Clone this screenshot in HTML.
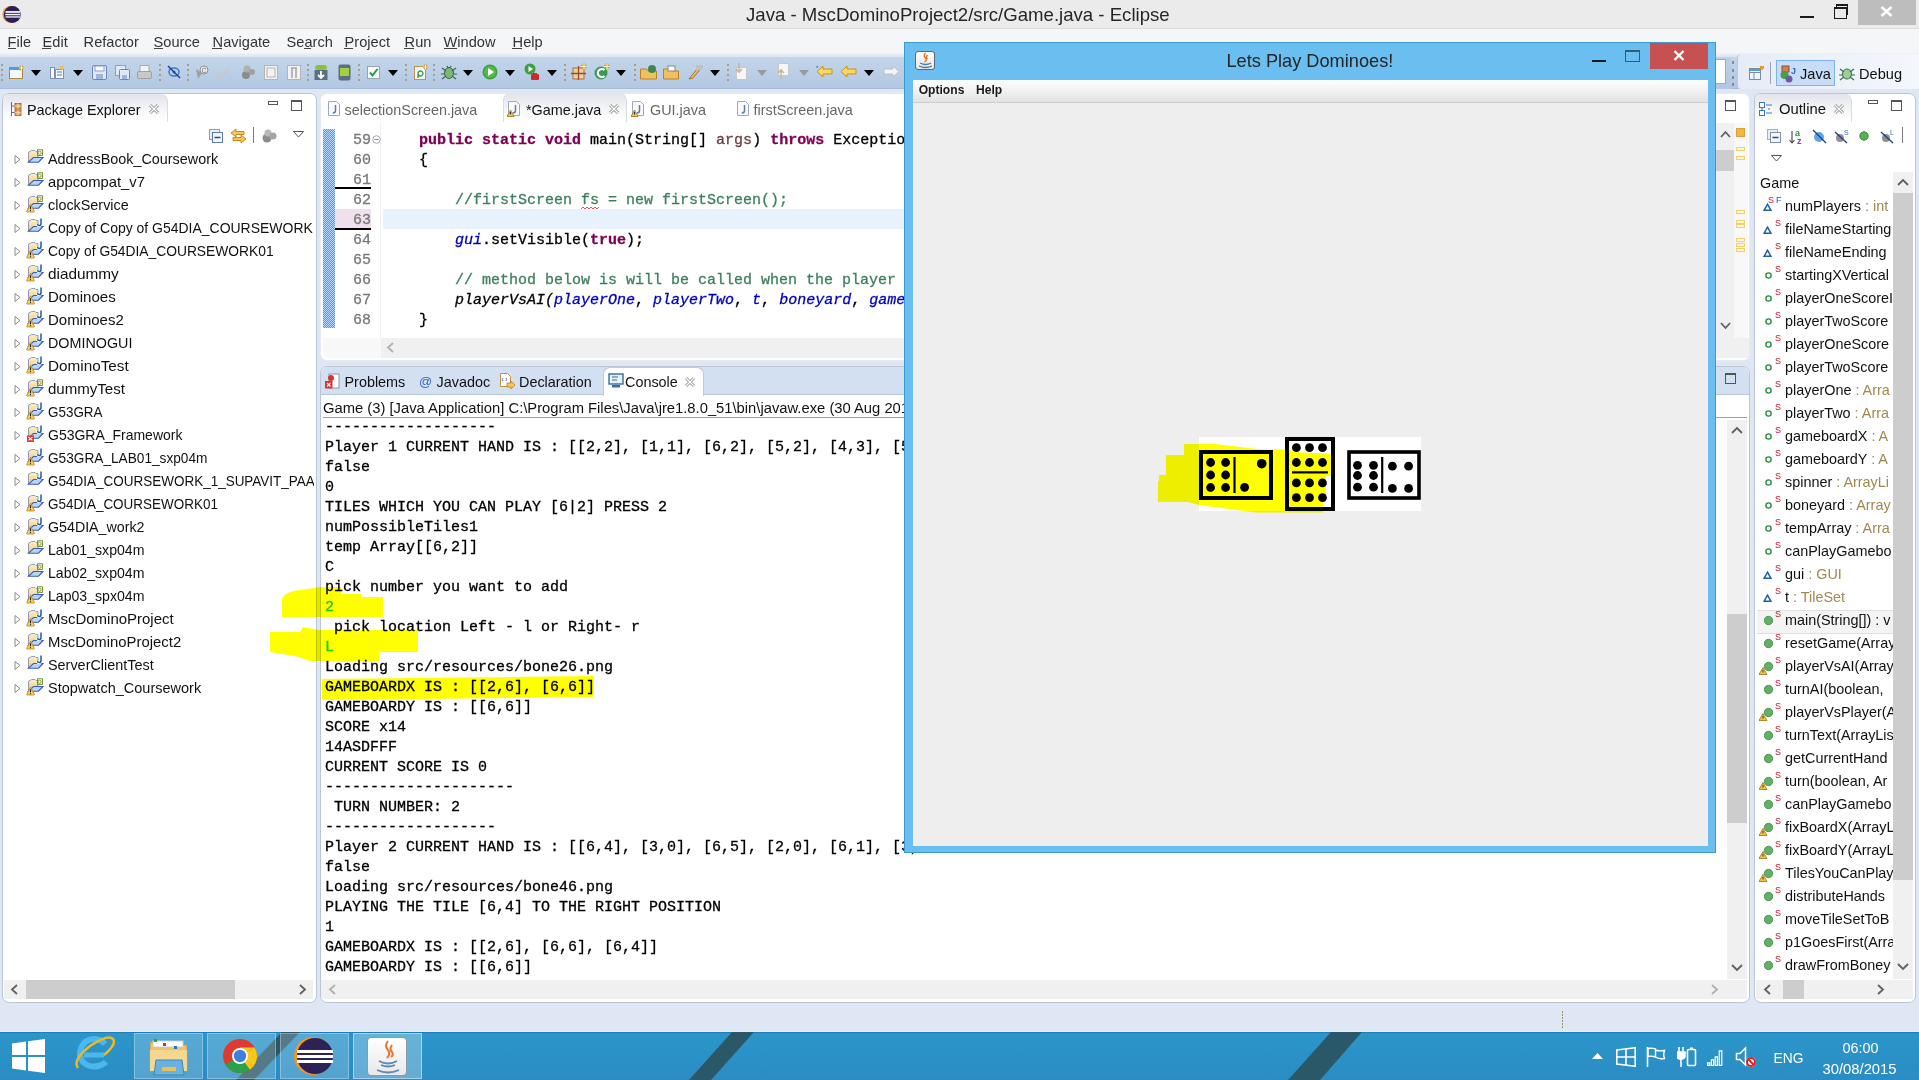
<!DOCTYPE html><html><head><meta charset="utf-8"><style>
html,body{margin:0;padding:0;}
body{width:1919px;height:1080px;overflow:hidden;position:relative;background:#dfe6f4;font-family:"Liberation Sans",sans-serif;}
.t{position:absolute;white-space:pre;}
.m{-webkit-text-stroke:0.3px currentColor;}
</style></head><body>
<div style="position:absolute;left:0px;top:0px;width:1919px;height:28px;background:#ebebeb;"></div>
<div style="position:absolute;left:0px;top:28px;width:1919px;height:1px;background:#dcdcdc;"></div>
<svg style="position:absolute;left:0px;top:0px;" width="28" height="28" viewBox="0 0 28 28"><circle cx="11" cy="14.4" r="8.6" fill="#f39a26"/><circle cx="12.3" cy="14.4" r="8.5" fill="#2a1f5c"/><rect x="5.5" y="11" width="14.5" height="1.9" fill="#e8e8f0"/><rect x="5.2" y="13.8" width="15" height="1.5" fill="#f4f4f8"/><rect x="5.5" y="16.2" width="14.5" height="1.5" fill="#d8dae8"/></svg>
<div class="t" style="left:746px;top:4.961px;font-family:'Liberation Sans', sans-serif;font-size:18.6px;line-height:20.78px;color:#262626;font-weight:normal;font-style:normal;">Java - MscDominoProject2/src/Game.java - Eclipse</div>
<div style="position:absolute;left:1800px;top:16px;width:14px;height:2px;background:#1a1a1a;"></div>
<div style="position:absolute;left:1836px;top:4px;width:12px;height:11px;border:1px solid #1a1a1a;border-top:2px solid #1a1a1a;box-sizing:border-box;"></div>
<div style="position:absolute;left:1834px;top:7px;width:13px;height:12px;border:1px solid #1a1a1a;border-top:2px solid #1a1a1a;box-sizing:border-box;background:#ebebeb;"></div>
<div style="position:absolute;left:1858px;top:0px;width:58px;height:25px;background:#bdbdbd;"></div>
<svg style="position:absolute;left:1880px;top:6px;" width="13" height="11" viewBox="0 0 13 11"><path d="M1.5 1 L11.5 10 M11.5 1 L1.5 10" stroke="#fff" stroke-width="2.4"/></svg>
<div style="position:absolute;left:0px;top:29px;width:1919px;height:24px;background:#f5f6f7;"></div>
<div style="position:absolute;left:0px;top:53px;width:1919px;height:4px;background:linear-gradient(#f0f3f8,#dbe5f1);"></div>
<div class="t" style="left:7.6px;top:33.983px;font-family:'Liberation Sans', sans-serif;font-size:14.6px;line-height:16.311px;color:#333;font-weight:normal;font-style:normal;transform:scale(1.0,1.05);transform-origin:0 13.217px;">File</div>
<div class="t" style="left:42.6px;top:33.983px;font-family:'Liberation Sans', sans-serif;font-size:14.6px;line-height:16.311px;color:#333;font-weight:normal;font-style:normal;transform:scale(1.0,1.05);transform-origin:0 13.217px;">Edit</div>
<div class="t" style="left:83.6px;top:33.983px;font-family:'Liberation Sans', sans-serif;font-size:14.6px;line-height:16.311px;color:#333;font-weight:normal;font-style:normal;transform:scale(1.0,1.05);transform-origin:0 13.217px;">Refactor</div>
<div class="t" style="left:153.6px;top:33.983px;font-family:'Liberation Sans', sans-serif;font-size:14.6px;line-height:16.311px;color:#333;font-weight:normal;font-style:normal;transform:scale(1.0,1.05);transform-origin:0 13.217px;">Source</div>
<div class="t" style="left:212.6px;top:33.983px;font-family:'Liberation Sans', sans-serif;font-size:14.6px;line-height:16.311px;color:#333;font-weight:normal;font-style:normal;transform:scale(1.0,1.05);transform-origin:0 13.217px;">Navigate</div>
<div class="t" style="left:286.6px;top:33.983px;font-family:'Liberation Sans', sans-serif;font-size:14.6px;line-height:16.311px;color:#333;font-weight:normal;font-style:normal;transform:scale(1.0,1.05);transform-origin:0 13.217px;">Search</div>
<div class="t" style="left:344.6px;top:33.983px;font-family:'Liberation Sans', sans-serif;font-size:14.6px;line-height:16.311px;color:#333;font-weight:normal;font-style:normal;transform:scale(1.0,1.05);transform-origin:0 13.217px;">Project</div>
<div class="t" style="left:404.6px;top:33.983px;font-family:'Liberation Sans', sans-serif;font-size:14.6px;line-height:16.311px;color:#333;font-weight:normal;font-style:normal;transform:scale(1.0,1.05);transform-origin:0 13.217px;">Run</div>
<div class="t" style="left:443.6px;top:33.983px;font-family:'Liberation Sans', sans-serif;font-size:14.6px;line-height:16.311px;color:#333;font-weight:normal;font-style:normal;transform:scale(1.0,1.05);transform-origin:0 13.217px;">Window</div>
<div class="t" style="left:512.6px;top:33.983px;font-family:'Liberation Sans', sans-serif;font-size:14.6px;line-height:16.311px;color:#333;font-weight:normal;font-style:normal;transform:scale(1.0,1.05);transform-origin:0 13.217px;">Help</div>
<div style="position:absolute;left:8px;top:48px;width:8px;height:1px;background:#444;"></div>
<div style="position:absolute;left:42px;top:48px;width:9px;height:1px;background:#444;"></div>
<div style="position:absolute;left:154px;top:48px;width:9px;height:1px;background:#444;"></div>
<div style="position:absolute;left:212px;top:48px;width:10px;height:1px;background:#444;"></div>
<div style="position:absolute;left:304px;top:48px;width:7px;height:1px;background:#444;"></div>
<div style="position:absolute;left:344px;top:48px;width:9px;height:1px;background:#444;"></div>
<div style="position:absolute;left:404px;top:48px;width:10px;height:1px;background:#444;"></div>
<div style="position:absolute;left:444px;top:48px;width:13px;height:1px;background:#444;"></div>
<div style="position:absolute;left:512px;top:48px;width:10px;height:1px;background:#444;"></div>
<div style="position:absolute;left:0px;top:57px;width:1919px;height:32px;background:linear-gradient(#c3d5ea,#b1c8e2);"></div>
<div style="position:absolute;left:0px;top:88px;width:1919px;height:1px;background:#a9bcd6;"></div>
<div style="position:absolute;left:1px;top:64px;width:2px;height:2px;background:#a89c84;"></div>
<div style="position:absolute;left:1px;top:69px;width:2px;height:2px;background:#a89c84;"></div>
<div style="position:absolute;left:1px;top:74px;width:2px;height:2px;background:#a89c84;"></div>
<div style="position:absolute;left:1px;top:79px;width:2px;height:2px;background:#a89c84;"></div>
<svg style="position:absolute;left:9px;top:65px;" width="16" height="15" viewBox="0 0 16 15"><rect x="0.5" y="2.5" width="13" height="11" fill="#f4f8fc" stroke="#b08840"/><rect x="1" y="3" width="12" height="2" fill="#4aa0e0"/><path d="M12.5 0.5 v5 M10 3 h5" stroke="#c89020" stroke-width="2.4"/><path d="M12.5 0.5 v5 M10 3 h5" stroke="#fff4b0" stroke-width="1"/></svg>
<svg style="position:absolute;left:31px;top:70px;" width="10" height="6" viewBox="0 0 10 6"><path d="M0 0 L10 0 L5 6 Z" fill="#000"/></svg>
<svg style="position:absolute;left:50px;top:65px;" width="16" height="15" viewBox="0 0 16 15"><rect x="0.5" y="2.5" width="4" height="11" fill="#f4f8fc" stroke="#8090b0"/><rect x="5.5" y="4.5" width="8" height="9" fill="#f4f8fc" stroke="#8090b0"/><path d="M7 7 h5 M7 10 h5" stroke="#6070a0"/><circle cx="12" cy="2.5" r="2.2" fill="#f0c060"/></svg>
<svg style="position:absolute;left:73px;top:70px;" width="10" height="6" viewBox="0 0 10 6"><path d="M0 0 L10 0 L5 6 Z" fill="#000"/></svg>
<svg style="position:absolute;left:92px;top:65px;" width="15" height="15" viewBox="0 0 15 15"><rect x="0.5" y="0.5" width="14" height="14" rx="1.5" fill="#dfe8f4" stroke="#6a86c0"/><rect x="3" y="1" width="9" height="5" fill="#f8fbff" stroke="#8aa0c8"/><rect x="4" y="9" width="7" height="5" fill="#9fb4d8"/></svg>
<svg style="position:absolute;left:115px;top:65px;" width="15" height="15" viewBox="0 0 15 15"><rect x="0.5" y="0.5" width="10" height="10" fill="#dfe8f4" stroke="#8aa0c8"/><rect x="4.5" y="4.5" width="10" height="10" rx="1" fill="#dfe8f4" stroke="#6a86c0"/><rect x="7" y="10" width="5" height="4" fill="#9fb4d8"/></svg>
<svg style="position:absolute;left:137px;top:65px;" width="15" height="15" viewBox="0 0 15 15"><rect x="3" y="0.5" width="9" height="6" fill="#f4f4f4" stroke="#aaa"/><rect x="0.5" y="6.5" width="14" height="7" rx="1.5" fill="#c8c8c8" stroke="#a0a0a0"/></svg>
<div style="position:absolute;left:159px;top:64px;width:2px;height:2px;background:#a89c84;"></div>
<div style="position:absolute;left:159px;top:69px;width:2px;height:2px;background:#a89c84;"></div>
<div style="position:absolute;left:159px;top:74px;width:2px;height:2px;background:#a89c84;"></div>
<div style="position:absolute;left:159px;top:79px;width:2px;height:2px;background:#a89c84;"></div>
<svg style="position:absolute;left:167px;top:65px;" width="14" height="14" viewBox="0 0 14 14"><ellipse cx="7" cy="7" rx="5" ry="4" fill="none" stroke="#3c78c8" stroke-width="1.5"/><circle cx="7" cy="7" r="1.6" fill="#3c78c8"/><path d="M1 1 L13 13" stroke="#1c3c90" stroke-width="1.4"/></svg>
<div style="position:absolute;left:187px;top:64px;width:2px;height:2px;background:#a89c84;"></div>
<div style="position:absolute;left:187px;top:69px;width:2px;height:2px;background:#a89c84;"></div>
<div style="position:absolute;left:187px;top:74px;width:2px;height:2px;background:#a89c84;"></div>
<div style="position:absolute;left:187px;top:79px;width:2px;height:2px;background:#a89c84;"></div>
<svg style="position:absolute;left:194px;top:65px;" width="15" height="15" viewBox="0 0 15 15"><path d="M2 4 L8 8 L4 14 Z" fill="#a0a0a0"/><circle cx="10" cy="5" r="4" fill="#e8e8e8" stroke="#909090"/><text x="7.5" y="8" font-size="7" font-family="Liberation Sans" fill="#707070">C</text></svg>
<svg style="position:absolute;left:216px;top:65px;" width="15" height="15" viewBox="0 0 15 15"><path d="M1 14 L10 5 L14 1 L12 6 L4 14 Z" fill="#c8c8c8"/></svg>
<svg style="position:absolute;left:241px;top:65px;" width="14" height="15" viewBox="0 0 14 15"><circle cx="5" cy="10" r="4" fill="#8c8c8c"/><circle cx="6" cy="4" r="3.5" fill="#b0b0b0"/><circle cx="11" cy="7" r="3" fill="#a0a0a0"/></svg>
<svg style="position:absolute;left:264px;top:65px;" width="14" height="15" viewBox="0 0 14 15"><rect x="0.5" y="0.5" width="13" height="14" fill="#f2f2f2" stroke="#b4b4b4"/><rect x="3" y="3" width="8" height="9" fill="none" stroke="#b4b4b4"/></svg>
<svg style="position:absolute;left:287px;top:65px;" width="14" height="15" viewBox="0 0 14 15"><rect x="0.5" y="0.5" width="13" height="14" fill="#f2f2f2" stroke="#b4b4b4"/><path d="M5 3 v10 M9 3 v10 M4 3 h6" stroke="#a8a8a8" stroke-width="1.6"/></svg>
<div style="position:absolute;left:307px;top:64px;width:2px;height:2px;background:#a89c84;"></div>
<div style="position:absolute;left:307px;top:69px;width:2px;height:2px;background:#a89c84;"></div>
<div style="position:absolute;left:307px;top:74px;width:2px;height:2px;background:#a89c84;"></div>
<div style="position:absolute;left:307px;top:79px;width:2px;height:2px;background:#a89c84;"></div>
<svg style="position:absolute;left:314px;top:63px;" width="14" height="18" viewBox="0 0 14 18"><rect x="1" y="2" width="12" height="5" rx="3" fill="#8cc040"/><rect x="0.5" y="7" width="13" height="10" fill="#5a6f80"/><path d="M7 8 v7 M4 12 l3 3 l3 -3" stroke="#fff" stroke-width="1.8" fill="none"/></svg>
<svg style="position:absolute;left:338px;top:64px;" width="13" height="17" viewBox="0 0 13 17"><rect x="0.5" y="0.5" width="12" height="16" rx="2" fill="#5a6f80"/><rect x="2" y="4" width="9" height="8" fill="#a4d040"/></svg>
<div style="position:absolute;left:358px;top:64px;width:2px;height:2px;background:#a89c84;"></div>
<div style="position:absolute;left:358px;top:69px;width:2px;height:2px;background:#a89c84;"></div>
<div style="position:absolute;left:358px;top:74px;width:2px;height:2px;background:#a89c84;"></div>
<div style="position:absolute;left:358px;top:79px;width:2px;height:2px;background:#a89c84;"></div>
<svg style="position:absolute;left:367px;top:66px;" width="13" height="13" viewBox="0 0 13 13"><rect x="0.5" y="0.5" width="12" height="12" fill="#f8f8f8" stroke="#9aa4b0"/><path d="M3 6.5 L5.5 9.5 L10.5 3" stroke="#2a9a40" stroke-width="2" fill="none"/></svg>
<svg style="position:absolute;left:388px;top:70px;" width="10" height="6" viewBox="0 0 10 6"><path d="M0 0 L10 0 L5 6 Z" fill="#000"/></svg>
<div style="position:absolute;left:405px;top:64px;width:2px;height:2px;background:#a89c84;"></div>
<div style="position:absolute;left:405px;top:69px;width:2px;height:2px;background:#a89c84;"></div>
<div style="position:absolute;left:405px;top:74px;width:2px;height:2px;background:#a89c84;"></div>
<div style="position:absolute;left:405px;top:79px;width:2px;height:2px;background:#a89c84;"></div>
<svg style="position:absolute;left:414px;top:64px;" width="14" height="16" viewBox="0 0 14 16"><rect x="0.5" y="2.5" width="11" height="13" fill="#fafafa" stroke="#c09050"/><path d="M4 14 v-5 a2.5 2.5 0 1 1 0 1" stroke="#2a9a40" fill="none" stroke-width="1.3"/><path d="M11.5 0.5 v5 M9 3 h5" stroke="#c89020" stroke-width="2.4"/><path d="M11.5 0.5 v5 M9 3 h5" stroke="#fff4b0" stroke-width="1"/></svg>
<div style="position:absolute;left:433px;top:64px;width:2px;height:2px;background:#a89c84;"></div>
<div style="position:absolute;left:433px;top:69px;width:2px;height:2px;background:#a89c84;"></div>
<div style="position:absolute;left:433px;top:74px;width:2px;height:2px;background:#a89c84;"></div>
<div style="position:absolute;left:433px;top:79px;width:2px;height:2px;background:#a89c84;"></div>
<svg style="position:absolute;left:441px;top:64px;" width="16" height="16" viewBox="0 0 16 16"><ellipse cx="8" cy="9" rx="4.5" ry="5.5" fill="#7cb870" stroke="#3a6a50"/><path d="M1 4 l4 3 M15 4 l-4 3 M0 10 h4 M16 10 h-4 M1 15 l4 -3 M15 15 l-4 -3 M6 2 l1 2 M10 2 l-1 2" stroke="#3a6a50" stroke-width="1.2"/></svg>
<svg style="position:absolute;left:463px;top:70px;" width="10" height="6" viewBox="0 0 10 6"><path d="M0 0 L10 0 L5 6 Z" fill="#000"/></svg>
<svg style="position:absolute;left:482px;top:64px;" width="16" height="16" viewBox="0 0 16 16"><circle cx="8" cy="8" r="7.5" fill="#3aa040"/><circle cx="8" cy="8" r="6" fill="#54b848"/><path d="M6 4 L12 8 L6 12 Z" fill="#fff"/></svg>
<svg style="position:absolute;left:505px;top:70px;" width="10" height="6" viewBox="0 0 10 6"><path d="M0 0 L10 0 L5 6 Z" fill="#000"/></svg>
<svg style="position:absolute;left:524px;top:63px;" width="16" height="18" viewBox="0 0 16 18"><circle cx="6" cy="6" r="5.5" fill="#3aa040"/><path d="M4.5 3 L9 6 L4.5 9 Z" fill="#fff"/><rect x="7" y="11" width="8" height="6" rx="1" fill="#d02828"/><rect x="9" y="10" width="4" height="2" fill="#d02828"/></svg>
<svg style="position:absolute;left:547px;top:70px;" width="10" height="6" viewBox="0 0 10 6"><path d="M0 0 L10 0 L5 6 Z" fill="#000"/></svg>
<div style="position:absolute;left:564px;top:64px;width:2px;height:2px;background:#a89c84;"></div>
<div style="position:absolute;left:564px;top:69px;width:2px;height:2px;background:#a89c84;"></div>
<div style="position:absolute;left:564px;top:74px;width:2px;height:2px;background:#a89c84;"></div>
<div style="position:absolute;left:564px;top:79px;width:2px;height:2px;background:#a89c84;"></div>
<svg style="position:absolute;left:571px;top:63px;" width="17" height="17" viewBox="0 0 17 17"><rect x="2" y="5" width="11" height="11" fill="#ecd0a0" stroke="#b07040"/><path d="M7.5 3 v14 M0 10.5 h15" stroke="#a04828" stroke-width="1.3"/><path d="M13 0.5 v6 M10 3.5 h6" stroke="#c89020" stroke-width="2.6"/><path d="M13 0.5 v6 M10 3.5 h6" stroke="#fff4b0" stroke-width="1.2"/></svg>
<svg style="position:absolute;left:594px;top:63px;" width="17" height="17" viewBox="0 0 17 17"><circle cx="7" cy="10" r="6.5" fill="#3a9a50"/><path d="M10.5 7 A4 4 0 1 0 10.5 13" stroke="#fff" stroke-width="2.2" fill="none"/><path d="M13 0.5 v6 M10 3.5 h6" stroke="#c89020" stroke-width="2.6"/><path d="M13 0.5 v6 M10 3.5 h6" stroke="#fff4b0" stroke-width="1.2"/></svg>
<svg style="position:absolute;left:616px;top:70px;" width="10" height="6" viewBox="0 0 10 6"><path d="M0 0 L10 0 L5 6 Z" fill="#000"/></svg>
<div style="position:absolute;left:634px;top:64px;width:2px;height:2px;background:#a89c84;"></div>
<div style="position:absolute;left:634px;top:69px;width:2px;height:2px;background:#a89c84;"></div>
<div style="position:absolute;left:634px;top:74px;width:2px;height:2px;background:#a89c84;"></div>
<div style="position:absolute;left:634px;top:79px;width:2px;height:2px;background:#a89c84;"></div>
<svg style="position:absolute;left:640px;top:64px;" width="17" height="16" viewBox="0 0 17 16"><path d="M0.5 5 h6 l2 2 h8 v8 h-16 Z" fill="#f0c060" stroke="#c08020"/><circle cx="12" cy="5" r="4" fill="#3a8a50"/></svg>
<svg style="position:absolute;left:663px;top:64px;" width="16" height="16" viewBox="0 0 16 16"><path d="M0.5 5 h6 l2 2 h7 v8 h-15 Z" fill="#f0c060" stroke="#c08020"/><rect x="5" y="2" width="7" height="5" fill="#fff" stroke="#888"/></svg>
<svg style="position:absolute;left:687px;top:64px;" width="16" height="16" viewBox="0 0 16 16"><path d="M2 15 L10 5 L14 1 L15 3 L6 14 Z" fill="#f0c060" stroke="#a07030"/><rect x="9" y="1" width="6" height="5" fill="#c0c0c0"/></svg>
<svg style="position:absolute;left:710px;top:70px;" width="10" height="6" viewBox="0 0 10 6"><path d="M0 0 L10 0 L5 6 Z" fill="#000"/></svg>
<div style="position:absolute;left:727px;top:64px;width:2px;height:2px;background:#a89c84;"></div>
<div style="position:absolute;left:727px;top:69px;width:2px;height:2px;background:#a89c84;"></div>
<div style="position:absolute;left:727px;top:74px;width:2px;height:2px;background:#a89c84;"></div>
<div style="position:absolute;left:727px;top:79px;width:2px;height:2px;background:#a89c84;"></div>
<svg style="position:absolute;left:734px;top:63px;" width="14" height="17" viewBox="0 0 14 17"><rect x="2.5" y="4.5" width="10" height="12" fill="#f6f6f6" stroke="#c8c8c8"/><path d="M5 0 v9 M2 6 l3 3 l3 -3" stroke="#c8b898" stroke-width="1.6" fill="none"/></svg>
<svg style="position:absolute;left:757px;top:70px;" width="10" height="6" viewBox="0 0 10 6"><path d="M0 0 L10 0 L5 6 Z" fill="#9a9a9a"/></svg>
<svg style="position:absolute;left:776px;top:63px;" width="14" height="17" viewBox="0 0 14 17"><rect x="2.5" y="0.5" width="10" height="12" fill="#f6f6f6" stroke="#c8c8c8"/><path d="M5 16 v-9 M2 10 l3 -3 l3 3" stroke="#c8b898" stroke-width="1.6" fill="none"/></svg>
<svg style="position:absolute;left:799px;top:70px;" width="10" height="6" viewBox="0 0 10 6"><path d="M0 0 L10 0 L5 6 Z" fill="#9a9a9a"/></svg>
<svg style="position:absolute;left:816px;top:65px;" width="17" height="13" viewBox="0 0 17 13"><path d="M7 1 L1 6.5 L7 12 V9 H16 V4 H7 Z" fill="#f8d860" stroke="#c89020"/><text x="0" y="5" font-size="6" fill="#1a5ab0">*</text></svg>
<svg style="position:absolute;left:840px;top:65px;" width="17" height="13" viewBox="0 0 17 13"><path d="M7 1 L1 6.5 L7 12 V9 H16 V4 H7 Z" fill="#f8d860" stroke="#c89020"/></svg>
<svg style="position:absolute;left:864px;top:70px;" width="10" height="6" viewBox="0 0 10 6"><path d="M0 0 L10 0 L5 6 Z" fill="#000"/></svg>
<svg style="position:absolute;left:883px;top:65px;" width="17" height="13" viewBox="0 0 17 13"><path d="M10 1 L16 6.5 L10 12 V9 H1 V4 H10 Z" fill="#f4f4f4" stroke="#c0c0c0"/></svg>
<div style="position:absolute;left:1716px;top:57px;width:15px;height:32px;background:linear-gradient(#bcd0e8,#b0c7e2);"></div>
<div style="position:absolute;left:1716px;top:59px;width:10px;height:25px;background:#fff;border:1px solid #9aa8b8;box-sizing:border-box;border-left:none;"></div>
<div style="position:absolute;left:1732px;top:61px;width:2px;height:3px;background:#8c8c8c;"></div>
<div style="position:absolute;left:1732px;top:69px;width:2px;height:3px;background:#8c8c8c;"></div>
<div style="position:absolute;left:1732px;top:76px;width:2px;height:3px;background:#8c8c8c;"></div>
<div style="position:absolute;left:1732px;top:83px;width:2px;height:3px;background:#8c8c8c;"></div>
<div style="position:absolute;left:1737px;top:54px;width:182px;height:35px;background:linear-gradient(90deg,#e6ecf6,#f4f7fc);border-left:1px solid #b8c8dc;border-radius:4px 0 0 4px;"></div>
<svg style="position:absolute;left:1749px;top:66px;" width="15" height="14" viewBox="0 0 15 14"><rect x="0.5" y="2.5" width="11" height="11" fill="#eef4fb" stroke="#7d8aa0"/><path d="M0.5 6.5 h11 M5 6.5 v7" stroke="#7d8aa0"/><rect x="1" y="3" width="10" height="2" fill="#4aa0e0"/><path d="M11 0 l2 2 l2 -2 M13 0 v4 M11 2 h4" stroke="#e0a020" stroke-width="1.5"/></svg>
<div style="position:absolute;left:1770px;top:62px;width:1px;height:22px;background:#9aa4b4;"></div>
<div style="position:absolute;left:1776px;top:60px;width:59px;height:26px;background:#c6dcf7;border:1px solid #7eb2ea;box-sizing:border-box;"></div>
<svg style="position:absolute;left:1780px;top:65px;" width="18" height="18" viewBox="0 0 18 18"><rect x="2" y="1" width="7" height="6" fill="#d08050" stroke="#905030"/><circle cx="4.5" cy="10" r="4" fill="#48a048"/><circle cx="9" cy="14" r="3.5" fill="#7058a8"/><text x="11" y="9" font-size="9" font-weight="bold" font-family="Liberation Sans" fill="#3a6ab0">J</text></svg>
<div class="t" style="left:1800px;top:66.283px;font-family:'Liberation Sans', sans-serif;font-size:14.6px;line-height:16.311px;color:#111;font-weight:normal;font-style:normal;transform:scale(1.0,1.05);transform-origin:0 13.217px;">Java</div>
<svg style="position:absolute;left:1839px;top:66px;" width="16" height="15" viewBox="0 0 16 15"><ellipse cx="8" cy="8" rx="4.5" ry="5" fill="#9ad090" stroke="#3a6a50"/><path d="M1 3 l4 3 M15 3 l-4 3 M0 9 h4 M16 9 h-4 M1 14 l4 -3 M15 14 l-4 -3" stroke="#3a6a50" stroke-width="1.2"/></svg>
<div class="t" style="left:1859px;top:66.283px;font-family:'Liberation Sans', sans-serif;font-size:14.6px;line-height:16.311px;color:#111;font-weight:normal;font-style:normal;transform:scale(1.0,1.05);transform-origin:0 13.217px;">Debug</div>
<div style="position:absolute;left:2px;top:93px;width:315px;height:910px;background:#fff;border:1px solid #bcc5d6;box-sizing:border-box;border-radius:7px;"></div>
<div style="position:absolute;left:3px;top:94px;width:164px;height:28px;background:linear-gradient(#e2e4ea,#f6f7f9 60%,#fff);border-radius:7px 7px 0 0;border-right:1px solid #d8dce4;"></div>
<svg style="position:absolute;left:10px;top:101px;" width="12" height="16" viewBox="0 0 12 16"><path d="M1.5 1 v14 M1.5 5 h3 M1.5 11.5 h3" stroke="#6a6a88" stroke-width="1"/><rect x="5" y="2.5" width="6" height="5.5" fill="#e6a050" stroke="#9a5a20" stroke-width="0.8"/><rect x="5" y="9" width="6" height="5.5" fill="#e6a050" stroke="#9a5a20" stroke-width="0.8"/><path d="M5 5.2 h6 M8 2.5 v5.5 M5 11.7 h6 M8 9 v5.5" stroke="#fff3d0" stroke-width="0.7"/></svg>
<div class="t" style="left:27px;top:101.664px;font-family:'Liberation Sans', sans-serif;font-size:14.4px;line-height:16.088px;color:#111;font-weight:normal;font-style:normal;transform:scale(1.0,1.05);transform-origin:0 13.036px;">Package Explorer</div>
<svg style="position:absolute;left:148px;top:103px;" width="12" height="12" viewBox="0 0 12 12"><path d="M2 2 L10 10 M10 2 L2 10" stroke="#909090" stroke-width="3"/><path d="M2 2 L10 10 M10 2 L2 10" stroke="#fff" stroke-width="1.2"/></svg>
<div style="position:absolute;left:268px;top:101px;width:10px;height:4px;border:1px solid #555;box-sizing:border-box;"></div>
<div style="position:absolute;left:291px;top:100px;width:11px;height:11px;border:1px solid #555;border-top:2px solid #555;box-sizing:border-box;"></div>
<svg style="position:absolute;left:209px;top:129px;" width="15" height="14" viewBox="0 0 15 14"><rect x="0.5" y="0.5" width="10" height="10" fill="#e8eef8" stroke="#8aa0c0"/><rect x="3.5" y="3.5" width="10" height="10" fill="#f4f8fc" stroke="#5a7ab0"/><path d="M5.5 8.5 h6" stroke="#2a4a90" stroke-width="1.5"/></svg>
<svg style="position:absolute;left:230px;top:128px;" width="17" height="16" viewBox="0 0 17 16"><path d="M6 1 L1 5 L6 9 V6.5 H14 V3.5 H6 Z" fill="#f6c850" stroke="#c08020" stroke-width="0.9"/><path d="M11 7 L16 11 L11 15 V12.5 H3 V9.5 H11 Z" fill="#f6c850" stroke="#c08020" stroke-width="0.9"/></svg>
<div style="position:absolute;left:253px;top:127px;width:1px;height:16px;background:#7a7a7a;"></div>
<svg style="position:absolute;left:262px;top:129px;" width="15" height="14" viewBox="0 0 15 14"><circle cx="5" cy="9" r="4.5" fill="#8c8c8c"/><circle cx="6" cy="4" r="3.5" fill="#b8b8b8"/><circle cx="11" cy="7" r="3.5" fill="#a4a4a4"/></svg>
<svg style="position:absolute;left:293px;top:131px;" width="11" height="7" viewBox="0 0 11 7"><path d="M0.5 0.5 H10.5 L5.5 6 Z" fill="#fff" stroke="#555"/></svg>
<div style="position:absolute;left:0;top:0;width:314px;height:978px;overflow:hidden;">
<svg style="position:absolute;left:14px;top:155px;" width="7" height="9" viewBox="0 0 7 9"><path d="M1 0.5 L6 4.5 L1 8.5 Z" fill="#fff" stroke="#8a8a8a"/></svg>
<svg style="position:absolute;left:27px;top:149px;overflow:visible;" width="17" height="18" viewBox="0 0 17 18"><defs><linearGradient id="fg" x1="0" y1="0" x2="0" y2="1"><stop offset="0" stop-color="#fdf0c8"/><stop offset="1" stop-color="#f0c878"/></linearGradient></defs><path d="M1.5 13 V4 Q1.5 2.5 3 2.5 L4.5 1.5 H8 L9 2.5 H11 V8 L1.5 13 Z" fill="url(#fg)" stroke="#7888b0" stroke-width="0.8"/><path d="M1.5 13.2 L6.5 8.5 H16 L11.5 13.2 Z" fill="#b8d6f6" stroke="#3a58c0" stroke-width="1.1"/><rect x="10.5" y="0.8" width="5" height="5.6" fill="#fff" stroke="#6a8a20" stroke-width="0.9"/><circle cx="12.6" cy="3.8" r="1.6" fill="#fff6d8" stroke="#6a8a20" stroke-width="0.8"/></svg>
<div class="t" style="left:48px;top:150.764px;font-family:'Liberation Sans', sans-serif;font-size:14.4px;line-height:16.088px;color:#111;font-weight:normal;font-style:normal;transform:scale(0.9987,1.05);transform-origin:0 13.036px;">AddressBook_Coursework</div>
<svg style="position:absolute;left:14px;top:178px;" width="7" height="9" viewBox="0 0 7 9"><path d="M1 0.5 L6 4.5 L1 8.5 Z" fill="#fff" stroke="#8a8a8a"/></svg>
<svg style="position:absolute;left:27px;top:172px;overflow:visible;" width="17" height="18" viewBox="0 0 17 18"><path d="M1.5 13 V4 Q1.5 2.5 3 2.5 L4.5 1.5 H8 L9 2.5 H11 V8 L1.5 13 Z" fill="url(#fg)" stroke="#7888b0" stroke-width="0.8"/><path d="M1.5 13.2 L6.5 8.5 H16 L11.5 13.2 Z" fill="#b8d6f6" stroke="#3a58c0" stroke-width="1.1"/><rect x="10.5" y="0.8" width="5" height="5.6" fill="#fff" stroke="#6a8a20" stroke-width="0.9"/><circle cx="12.6" cy="3.8" r="1.6" fill="#fff6d8" stroke="#6a8a20" stroke-width="0.8"/></svg>
<div class="t" style="left:48px;top:173.764px;font-family:'Liberation Sans', sans-serif;font-size:14.4px;line-height:16.088px;color:#111;font-weight:normal;font-style:normal;transform:scale(1.0269,1.05);transform-origin:0 13.036px;">appcompat_v7</div>
<svg style="position:absolute;left:14px;top:201px;" width="7" height="9" viewBox="0 0 7 9"><path d="M1 0.5 L6 4.5 L1 8.5 Z" fill="#fff" stroke="#8a8a8a"/></svg>
<svg style="position:absolute;left:27px;top:195px;overflow:visible;" width="17" height="18" viewBox="0 0 17 18"><path d="M1.5 13 V4 Q1.5 2.5 3 2.5 L4.5 1.5 H8 L9 2.5 H11 V8 L1.5 13 Z" fill="url(#fg)" stroke="#7888b0" stroke-width="0.8"/><path d="M1.5 13.2 L6.5 8.5 H16 L11.5 13.2 Z" fill="#b8d6f6" stroke="#3a58c0" stroke-width="1.1"/><rect x="10.5" y="0.8" width="5" height="5.6" fill="#fff" stroke="#6a8a20" stroke-width="0.9"/><circle cx="12.6" cy="3.8" r="1.6" fill="#fff6d8" stroke="#6a8a20" stroke-width="0.8"/><path d="M3.5 9.3 L7.4 16.2 Q7.6 17 6.8 17 H0.2 Q-0.6 17 -0.2 16.2 Z" fill="#f6d060" stroke="#c08828" stroke-width="0.9"/><path d="M3.5 11.3 v3" stroke="#222" stroke-width="1.1"/><circle cx="3.5" cy="15.6" r="0.6" fill="#222"/></svg>
<div class="t" style="left:48px;top:196.764px;font-family:'Liberation Sans', sans-serif;font-size:14.4px;line-height:16.088px;color:#111;font-weight:normal;font-style:normal;transform:scale(0.9991,1.05);transform-origin:0 13.036px;">clockService</div>
<svg style="position:absolute;left:14px;top:224px;" width="7" height="9" viewBox="0 0 7 9"><path d="M1 0.5 L6 4.5 L1 8.5 Z" fill="#fff" stroke="#8a8a8a"/></svg>
<svg style="position:absolute;left:27px;top:218px;overflow:visible;" width="17" height="18" viewBox="0 0 17 18"><path d="M1.5 13 V4 Q1.5 2.5 3 2.5 L4.5 1.5 H8 L9 2.5 H11 V8 L1.5 13 Z" fill="url(#fg)" stroke="#7888b0" stroke-width="0.8"/><path d="M1.5 13.2 L6.5 8.5 H16 L11.5 13.2 Z" fill="#b8d6f6" stroke="#3a58c0" stroke-width="1.1"/><path d="M14 0.5 V5.5 Q14 7.6 12.2 7.6 Q10.6 7.6 10.6 6" stroke="#fff" stroke-width="3" fill="none"/><path d="M14 0.5 V5.5 Q14 7.6 12.2 7.6 Q10.6 7.6 10.6 6" stroke="#1f5f9f" stroke-width="1.5" fill="none"/></svg>
<div class="t" style="left:48px;top:219.764px;font-family:'Liberation Sans', sans-serif;font-size:14.4px;line-height:16.088px;color:#111;font-weight:normal;font-style:normal;transform:scale(0.9711,1.05);transform-origin:0 13.036px;">Copy of Copy of G54DIA_COURSEWORK</div>
<svg style="position:absolute;left:14px;top:247px;" width="7" height="9" viewBox="0 0 7 9"><path d="M1 0.5 L6 4.5 L1 8.5 Z" fill="#fff" stroke="#8a8a8a"/></svg>
<svg style="position:absolute;left:27px;top:241px;overflow:visible;" width="17" height="18" viewBox="0 0 17 18"><path d="M1.5 13 V4 Q1.5 2.5 3 2.5 L4.5 1.5 H8 L9 2.5 H11 V8 L1.5 13 Z" fill="url(#fg)" stroke="#7888b0" stroke-width="0.8"/><path d="M1.5 13.2 L6.5 8.5 H16 L11.5 13.2 Z" fill="#b8d6f6" stroke="#3a58c0" stroke-width="1.1"/><path d="M14 0.5 V5.5 Q14 7.6 12.2 7.6 Q10.6 7.6 10.6 6" stroke="#fff" stroke-width="3" fill="none"/><path d="M14 0.5 V5.5 Q14 7.6 12.2 7.6 Q10.6 7.6 10.6 6" stroke="#1f5f9f" stroke-width="1.5" fill="none"/><path d="M3.5 9.3 L7.4 16.2 Q7.6 17 6.8 17 H0.2 Q-0.6 17 -0.2 16.2 Z" fill="#f6d060" stroke="#c08828" stroke-width="0.9"/><path d="M3.5 11.3 v3" stroke="#222" stroke-width="1.1"/><circle cx="3.5" cy="15.6" r="0.6" fill="#222"/></svg>
<div class="t" style="left:48px;top:242.764px;font-family:'Liberation Sans', sans-serif;font-size:14.4px;line-height:16.088px;color:#111;font-weight:normal;font-style:normal;transform:scale(0.9595,1.05);transform-origin:0 13.036px;">Copy of G54DIA_COURSEWORK01</div>
<svg style="position:absolute;left:14px;top:270px;" width="7" height="9" viewBox="0 0 7 9"><path d="M1 0.5 L6 4.5 L1 8.5 Z" fill="#fff" stroke="#8a8a8a"/></svg>
<svg style="position:absolute;left:27px;top:264px;overflow:visible;" width="17" height="18" viewBox="0 0 17 18"><path d="M1.5 13 V4 Q1.5 2.5 3 2.5 L4.5 1.5 H8 L9 2.5 H11 V8 L1.5 13 Z" fill="url(#fg)" stroke="#7888b0" stroke-width="0.8"/><path d="M1.5 13.2 L6.5 8.5 H16 L11.5 13.2 Z" fill="#b8d6f6" stroke="#3a58c0" stroke-width="1.1"/><path d="M14 0.5 V5.5 Q14 7.6 12.2 7.6 Q10.6 7.6 10.6 6" stroke="#fff" stroke-width="3" fill="none"/><path d="M14 0.5 V5.5 Q14 7.6 12.2 7.6 Q10.6 7.6 10.6 6" stroke="#1f5f9f" stroke-width="1.5" fill="none"/><path d="M3.5 9.3 L7.4 16.2 Q7.6 17 6.8 17 H0.2 Q-0.6 17 -0.2 16.2 Z" fill="#f6d060" stroke="#c08828" stroke-width="0.9"/><path d="M3.5 11.3 v3" stroke="#222" stroke-width="1.1"/><circle cx="3.5" cy="15.6" r="0.6" fill="#222"/></svg>
<div class="t" style="left:48px;top:265.764px;font-family:'Liberation Sans', sans-serif;font-size:14.4px;line-height:16.088px;color:#111;font-weight:normal;font-style:normal;transform:scale(1.0652,1.05);transform-origin:0 13.036px;">diadummy</div>
<svg style="position:absolute;left:14px;top:293px;" width="7" height="9" viewBox="0 0 7 9"><path d="M1 0.5 L6 4.5 L1 8.5 Z" fill="#fff" stroke="#8a8a8a"/></svg>
<svg style="position:absolute;left:27px;top:287px;overflow:visible;" width="17" height="18" viewBox="0 0 17 18"><path d="M1.5 13 V4 Q1.5 2.5 3 2.5 L4.5 1.5 H8 L9 2.5 H11 V8 L1.5 13 Z" fill="url(#fg)" stroke="#7888b0" stroke-width="0.8"/><path d="M1.5 13.2 L6.5 8.5 H16 L11.5 13.2 Z" fill="#b8d6f6" stroke="#3a58c0" stroke-width="1.1"/><path d="M14 0.5 V5.5 Q14 7.6 12.2 7.6 Q10.6 7.6 10.6 6" stroke="#fff" stroke-width="3" fill="none"/><path d="M14 0.5 V5.5 Q14 7.6 12.2 7.6 Q10.6 7.6 10.6 6" stroke="#1f5f9f" stroke-width="1.5" fill="none"/><path d="M3.5 9.3 L7.4 16.2 Q7.6 17 6.8 17 H0.2 Q-0.6 17 -0.2 16.2 Z" fill="#f6d060" stroke="#c08828" stroke-width="0.9"/><path d="M3.5 11.3 v3" stroke="#222" stroke-width="1.1"/><circle cx="3.5" cy="15.6" r="0.6" fill="#222"/></svg>
<div class="t" style="left:48px;top:288.764px;font-family:'Liberation Sans', sans-serif;font-size:14.4px;line-height:16.088px;color:#111;font-weight:normal;font-style:normal;transform:scale(1.0451,1.05);transform-origin:0 13.036px;">Dominoes</div>
<svg style="position:absolute;left:14px;top:316px;" width="7" height="9" viewBox="0 0 7 9"><path d="M1 0.5 L6 4.5 L1 8.5 Z" fill="#fff" stroke="#8a8a8a"/></svg>
<svg style="position:absolute;left:27px;top:310px;overflow:visible;" width="17" height="18" viewBox="0 0 17 18"><path d="M1.5 13 V4 Q1.5 2.5 3 2.5 L4.5 1.5 H8 L9 2.5 H11 V8 L1.5 13 Z" fill="url(#fg)" stroke="#7888b0" stroke-width="0.8"/><path d="M1.5 13.2 L6.5 8.5 H16 L11.5 13.2 Z" fill="#b8d6f6" stroke="#3a58c0" stroke-width="1.1"/><path d="M14 0.5 V5.5 Q14 7.6 12.2 7.6 Q10.6 7.6 10.6 6" stroke="#fff" stroke-width="3" fill="none"/><path d="M14 0.5 V5.5 Q14 7.6 12.2 7.6 Q10.6 7.6 10.6 6" stroke="#1f5f9f" stroke-width="1.5" fill="none"/><path d="M3.5 9.3 L7.4 16.2 Q7.6 17 6.8 17 H0.2 Q-0.6 17 -0.2 16.2 Z" fill="#f6d060" stroke="#c08828" stroke-width="0.9"/><path d="M3.5 11.3 v3" stroke="#222" stroke-width="1.1"/><circle cx="3.5" cy="15.6" r="0.6" fill="#222"/></svg>
<div class="t" style="left:48px;top:311.764px;font-family:'Liberation Sans', sans-serif;font-size:14.4px;line-height:16.088px;color:#111;font-weight:normal;font-style:normal;transform:scale(1.0401,1.05);transform-origin:0 13.036px;">Dominoes2</div>
<svg style="position:absolute;left:14px;top:339px;" width="7" height="9" viewBox="0 0 7 9"><path d="M1 0.5 L6 4.5 L1 8.5 Z" fill="#fff" stroke="#8a8a8a"/></svg>
<svg style="position:absolute;left:27px;top:333px;overflow:visible;" width="17" height="18" viewBox="0 0 17 18"><path d="M1.5 13 V4 Q1.5 2.5 3 2.5 L4.5 1.5 H8 L9 2.5 H11 V8 L1.5 13 Z" fill="url(#fg)" stroke="#7888b0" stroke-width="0.8"/><path d="M1.5 13.2 L6.5 8.5 H16 L11.5 13.2 Z" fill="#b8d6f6" stroke="#3a58c0" stroke-width="1.1"/><path d="M14 0.5 V5.5 Q14 7.6 12.2 7.6 Q10.6 7.6 10.6 6" stroke="#fff" stroke-width="3" fill="none"/><path d="M14 0.5 V5.5 Q14 7.6 12.2 7.6 Q10.6 7.6 10.6 6" stroke="#1f5f9f" stroke-width="1.5" fill="none"/><path d="M3.5 9.3 L7.4 16.2 Q7.6 17 6.8 17 H0.2 Q-0.6 17 -0.2 16.2 Z" fill="#f6d060" stroke="#c08828" stroke-width="0.9"/><path d="M3.5 11.3 v3" stroke="#222" stroke-width="1.1"/><circle cx="3.5" cy="15.6" r="0.6" fill="#222"/></svg>
<div class="t" style="left:48px;top:334.764px;font-family:'Liberation Sans', sans-serif;font-size:14.4px;line-height:16.088px;color:#111;font-weight:normal;font-style:normal;transform:scale(0.9965,1.05);transform-origin:0 13.036px;">DOMINOGUI</div>
<svg style="position:absolute;left:14px;top:362px;" width="7" height="9" viewBox="0 0 7 9"><path d="M1 0.5 L6 4.5 L1 8.5 Z" fill="#fff" stroke="#8a8a8a"/></svg>
<svg style="position:absolute;left:27px;top:356px;overflow:visible;" width="17" height="18" viewBox="0 0 17 18"><path d="M1.5 13 V4 Q1.5 2.5 3 2.5 L4.5 1.5 H8 L9 2.5 H11 V8 L1.5 13 Z" fill="url(#fg)" stroke="#7888b0" stroke-width="0.8"/><path d="M1.5 13.2 L6.5 8.5 H16 L11.5 13.2 Z" fill="#b8d6f6" stroke="#3a58c0" stroke-width="1.1"/><path d="M14 0.5 V5.5 Q14 7.6 12.2 7.6 Q10.6 7.6 10.6 6" stroke="#fff" stroke-width="3" fill="none"/><path d="M14 0.5 V5.5 Q14 7.6 12.2 7.6 Q10.6 7.6 10.6 6" stroke="#1f5f9f" stroke-width="1.5" fill="none"/><path d="M3.5 9.3 L7.4 16.2 Q7.6 17 6.8 17 H0.2 Q-0.6 17 -0.2 16.2 Z" fill="#f6d060" stroke="#c08828" stroke-width="0.9"/><path d="M3.5 11.3 v3" stroke="#222" stroke-width="1.1"/><circle cx="3.5" cy="15.6" r="0.6" fill="#222"/></svg>
<div class="t" style="left:48px;top:357.764px;font-family:'Liberation Sans', sans-serif;font-size:14.4px;line-height:16.088px;color:#111;font-weight:normal;font-style:normal;transform:scale(1.0621,1.05);transform-origin:0 13.036px;">DominoTest</div>
<svg style="position:absolute;left:14px;top:385px;" width="7" height="9" viewBox="0 0 7 9"><path d="M1 0.5 L6 4.5 L1 8.5 Z" fill="#fff" stroke="#8a8a8a"/></svg>
<svg style="position:absolute;left:27px;top:379px;overflow:visible;" width="17" height="18" viewBox="0 0 17 18"><path d="M1.5 13 V4 Q1.5 2.5 3 2.5 L4.5 1.5 H8 L9 2.5 H11 V8 L1.5 13 Z" fill="url(#fg)" stroke="#7888b0" stroke-width="0.8"/><path d="M1.5 13.2 L6.5 8.5 H16 L11.5 13.2 Z" fill="#b8d6f6" stroke="#3a58c0" stroke-width="1.1"/><rect x="10.5" y="0.8" width="5" height="5.6" fill="#fff" stroke="#6a8a20" stroke-width="0.9"/><circle cx="12.6" cy="3.8" r="1.6" fill="#fff6d8" stroke="#6a8a20" stroke-width="0.8"/><path d="M3.5 9.3 L7.4 16.2 Q7.6 17 6.8 17 H0.2 Q-0.6 17 -0.2 16.2 Z" fill="#f6d060" stroke="#c08828" stroke-width="0.9"/><path d="M3.5 11.3 v3" stroke="#222" stroke-width="1.1"/><circle cx="3.5" cy="15.6" r="0.6" fill="#222"/></svg>
<div class="t" style="left:48px;top:380.764px;font-family:'Liberation Sans', sans-serif;font-size:14.4px;line-height:16.088px;color:#111;font-weight:normal;font-style:normal;transform:scale(1.046,1.05);transform-origin:0 13.036px;">dummyTest</div>
<svg style="position:absolute;left:14px;top:408px;" width="7" height="9" viewBox="0 0 7 9"><path d="M1 0.5 L6 4.5 L1 8.5 Z" fill="#fff" stroke="#8a8a8a"/></svg>
<svg style="position:absolute;left:27px;top:402px;overflow:visible;" width="17" height="18" viewBox="0 0 17 18"><path d="M1.5 13 V4 Q1.5 2.5 3 2.5 L4.5 1.5 H8 L9 2.5 H11 V8 L1.5 13 Z" fill="url(#fg)" stroke="#7888b0" stroke-width="0.8"/><path d="M1.5 13.2 L6.5 8.5 H16 L11.5 13.2 Z" fill="#b8d6f6" stroke="#3a58c0" stroke-width="1.1"/><path d="M14 0.5 V5.5 Q14 7.6 12.2 7.6 Q10.6 7.6 10.6 6" stroke="#fff" stroke-width="3" fill="none"/><path d="M14 0.5 V5.5 Q14 7.6 12.2 7.6 Q10.6 7.6 10.6 6" stroke="#1f5f9f" stroke-width="1.5" fill="none"/><path d="M3.5 9.3 L7.4 16.2 Q7.6 17 6.8 17 H0.2 Q-0.6 17 -0.2 16.2 Z" fill="#f6d060" stroke="#c08828" stroke-width="0.9"/><path d="M3.5 11.3 v3" stroke="#222" stroke-width="1.1"/><circle cx="3.5" cy="15.6" r="0.6" fill="#222"/></svg>
<div class="t" style="left:48px;top:403.764px;font-family:'Liberation Sans', sans-serif;font-size:14.4px;line-height:16.088px;color:#111;font-weight:normal;font-style:normal;transform:scale(0.9329,1.05);transform-origin:0 13.036px;">G53GRA</div>
<svg style="position:absolute;left:14px;top:431px;" width="7" height="9" viewBox="0 0 7 9"><path d="M1 0.5 L6 4.5 L1 8.5 Z" fill="#fff" stroke="#8a8a8a"/></svg>
<svg style="position:absolute;left:27px;top:425px;overflow:visible;" width="17" height="18" viewBox="0 0 17 18"><path d="M1.5 13 V4 Q1.5 2.5 3 2.5 L4.5 1.5 H8 L9 2.5 H11 V8 L1.5 13 Z" fill="url(#fg)" stroke="#7888b0" stroke-width="0.8"/><path d="M1.5 13.2 L6.5 8.5 H16 L11.5 13.2 Z" fill="#b8d6f6" stroke="#3a58c0" stroke-width="1.1"/><path d="M14 0.5 V5.5 Q14 7.6 12.2 7.6 Q10.6 7.6 10.6 6" stroke="#fff" stroke-width="3" fill="none"/><path d="M14 0.5 V5.5 Q14 7.6 12.2 7.6 Q10.6 7.6 10.6 6" stroke="#1f5f9f" stroke-width="1.5" fill="none"/><rect x="0" y="10.5" width="7" height="6.5" fill="#e03838"/><path d="M1.6 12.2 L5.4 15.4 M5.4 12.2 L1.6 15.4" stroke="#fff" stroke-width="1.1"/></svg>
<div class="t" style="left:48px;top:426.764px;font-family:'Liberation Sans', sans-serif;font-size:14.4px;line-height:16.088px;color:#111;font-weight:normal;font-style:normal;transform:scale(0.9716,1.05);transform-origin:0 13.036px;">G53GRA_Framework</div>
<svg style="position:absolute;left:14px;top:454px;" width="7" height="9" viewBox="0 0 7 9"><path d="M1 0.5 L6 4.5 L1 8.5 Z" fill="#fff" stroke="#8a8a8a"/></svg>
<svg style="position:absolute;left:27px;top:448px;overflow:visible;" width="17" height="18" viewBox="0 0 17 18"><path d="M1.5 13 V4 Q1.5 2.5 3 2.5 L4.5 1.5 H8 L9 2.5 H11 V8 L1.5 13 Z" fill="url(#fg)" stroke="#7888b0" stroke-width="0.8"/><path d="M1.5 13.2 L6.5 8.5 H16 L11.5 13.2 Z" fill="#b8d6f6" stroke="#3a58c0" stroke-width="1.1"/><path d="M14 0.5 V5.5 Q14 7.6 12.2 7.6 Q10.6 7.6 10.6 6" stroke="#fff" stroke-width="3" fill="none"/><path d="M14 0.5 V5.5 Q14 7.6 12.2 7.6 Q10.6 7.6 10.6 6" stroke="#1f5f9f" stroke-width="1.5" fill="none"/><path d="M3.5 9.3 L7.4 16.2 Q7.6 17 6.8 17 H0.2 Q-0.6 17 -0.2 16.2 Z" fill="#f6d060" stroke="#c08828" stroke-width="0.9"/><path d="M3.5 11.3 v3" stroke="#222" stroke-width="1.1"/><circle cx="3.5" cy="15.6" r="0.6" fill="#222"/></svg>
<div class="t" style="left:48px;top:449.764px;font-family:'Liberation Sans', sans-serif;font-size:14.4px;line-height:16.088px;color:#111;font-weight:normal;font-style:normal;transform:scale(0.9489,1.05);transform-origin:0 13.036px;">G53GRA_LAB01_sxp04m</div>
<svg style="position:absolute;left:14px;top:477px;" width="7" height="9" viewBox="0 0 7 9"><path d="M1 0.5 L6 4.5 L1 8.5 Z" fill="#fff" stroke="#8a8a8a"/></svg>
<svg style="position:absolute;left:27px;top:471px;overflow:visible;" width="17" height="18" viewBox="0 0 17 18"><path d="M1.5 13 V4 Q1.5 2.5 3 2.5 L4.5 1.5 H8 L9 2.5 H11 V8 L1.5 13 Z" fill="url(#fg)" stroke="#7888b0" stroke-width="0.8"/><path d="M1.5 13.2 L6.5 8.5 H16 L11.5 13.2 Z" fill="#b8d6f6" stroke="#3a58c0" stroke-width="1.1"/><path d="M14 0.5 V5.5 Q14 7.6 12.2 7.6 Q10.6 7.6 10.6 6" stroke="#fff" stroke-width="3" fill="none"/><path d="M14 0.5 V5.5 Q14 7.6 12.2 7.6 Q10.6 7.6 10.6 6" stroke="#1f5f9f" stroke-width="1.5" fill="none"/></svg>
<div class="t" style="left:48px;top:472.764px;font-family:'Liberation Sans', sans-serif;font-size:14.4px;line-height:16.088px;color:#111;font-weight:normal;font-style:normal;transform:scale(0.9372,1.05);transform-origin:0 13.036px;">G54DIA_COURSEWORK_1_SUPAVIT_PAA</div>
<svg style="position:absolute;left:14px;top:500px;" width="7" height="9" viewBox="0 0 7 9"><path d="M1 0.5 L6 4.5 L1 8.5 Z" fill="#fff" stroke="#8a8a8a"/></svg>
<svg style="position:absolute;left:27px;top:494px;overflow:visible;" width="17" height="18" viewBox="0 0 17 18"><path d="M1.5 13 V4 Q1.5 2.5 3 2.5 L4.5 1.5 H8 L9 2.5 H11 V8 L1.5 13 Z" fill="url(#fg)" stroke="#7888b0" stroke-width="0.8"/><path d="M1.5 13.2 L6.5 8.5 H16 L11.5 13.2 Z" fill="#b8d6f6" stroke="#3a58c0" stroke-width="1.1"/><path d="M14 0.5 V5.5 Q14 7.6 12.2 7.6 Q10.6 7.6 10.6 6" stroke="#fff" stroke-width="3" fill="none"/><path d="M14 0.5 V5.5 Q14 7.6 12.2 7.6 Q10.6 7.6 10.6 6" stroke="#1f5f9f" stroke-width="1.5" fill="none"/><path d="M3.5 9.3 L7.4 16.2 Q7.6 17 6.8 17 H0.2 Q-0.6 17 -0.2 16.2 Z" fill="#f6d060" stroke="#c08828" stroke-width="0.9"/><path d="M3.5 11.3 v3" stroke="#222" stroke-width="1.1"/><circle cx="3.5" cy="15.6" r="0.6" fill="#222"/></svg>
<div class="t" style="left:48px;top:495.764px;font-family:'Liberation Sans', sans-serif;font-size:14.4px;line-height:16.088px;color:#111;font-weight:normal;font-style:normal;transform:scale(0.9359,1.05);transform-origin:0 13.036px;">G54DIA_COURSEWORK01</div>
<svg style="position:absolute;left:14px;top:523px;" width="7" height="9" viewBox="0 0 7 9"><path d="M1 0.5 L6 4.5 L1 8.5 Z" fill="#fff" stroke="#8a8a8a"/></svg>
<svg style="position:absolute;left:27px;top:517px;overflow:visible;" width="17" height="18" viewBox="0 0 17 18"><path d="M1.5 13 V4 Q1.5 2.5 3 2.5 L4.5 1.5 H8 L9 2.5 H11 V8 L1.5 13 Z" fill="url(#fg)" stroke="#7888b0" stroke-width="0.8"/><path d="M1.5 13.2 L6.5 8.5 H16 L11.5 13.2 Z" fill="#b8d6f6" stroke="#3a58c0" stroke-width="1.1"/><path d="M14 0.5 V5.5 Q14 7.6 12.2 7.6 Q10.6 7.6 10.6 6" stroke="#fff" stroke-width="3" fill="none"/><path d="M14 0.5 V5.5 Q14 7.6 12.2 7.6 Q10.6 7.6 10.6 6" stroke="#1f5f9f" stroke-width="1.5" fill="none"/><path d="M3.5 9.3 L7.4 16.2 Q7.6 17 6.8 17 H0.2 Q-0.6 17 -0.2 16.2 Z" fill="#f6d060" stroke="#c08828" stroke-width="0.9"/><path d="M3.5 11.3 v3" stroke="#222" stroke-width="1.1"/><circle cx="3.5" cy="15.6" r="0.6" fill="#222"/></svg>
<div class="t" style="left:48px;top:518.764px;font-family:'Liberation Sans', sans-serif;font-size:14.4px;line-height:16.088px;color:#111;font-weight:normal;font-style:normal;transform:scale(0.9883,1.05);transform-origin:0 13.036px;">G54DIA_work2</div>
<svg style="position:absolute;left:14px;top:546px;" width="7" height="9" viewBox="0 0 7 9"><path d="M1 0.5 L6 4.5 L1 8.5 Z" fill="#fff" stroke="#8a8a8a"/></svg>
<svg style="position:absolute;left:27px;top:540px;overflow:visible;" width="17" height="18" viewBox="0 0 17 18"><path d="M1.5 13 V4 Q1.5 2.5 3 2.5 L4.5 1.5 H8 L9 2.5 H11 V8 L1.5 13 Z" fill="url(#fg)" stroke="#7888b0" stroke-width="0.8"/><path d="M1.5 13.2 L6.5 8.5 H16 L11.5 13.2 Z" fill="#b8d6f6" stroke="#3a58c0" stroke-width="1.1"/><rect x="10.5" y="0.8" width="5" height="5.6" fill="#fff" stroke="#6a8a20" stroke-width="0.9"/><circle cx="12.6" cy="3.8" r="1.6" fill="#fff6d8" stroke="#6a8a20" stroke-width="0.8"/></svg>
<div class="t" style="left:48px;top:541.764px;font-family:'Liberation Sans', sans-serif;font-size:14.4px;line-height:16.088px;color:#111;font-weight:normal;font-style:normal;transform:scale(0.98,1.05);transform-origin:0 13.036px;">Lab01_sxp04m</div>
<svg style="position:absolute;left:14px;top:569px;" width="7" height="9" viewBox="0 0 7 9"><path d="M1 0.5 L6 4.5 L1 8.5 Z" fill="#fff" stroke="#8a8a8a"/></svg>
<svg style="position:absolute;left:27px;top:563px;overflow:visible;" width="17" height="18" viewBox="0 0 17 18"><path d="M1.5 13 V4 Q1.5 2.5 3 2.5 L4.5 1.5 H8 L9 2.5 H11 V8 L1.5 13 Z" fill="url(#fg)" stroke="#7888b0" stroke-width="0.8"/><path d="M1.5 13.2 L6.5 8.5 H16 L11.5 13.2 Z" fill="#b8d6f6" stroke="#3a58c0" stroke-width="1.1"/><rect x="10.5" y="0.8" width="5" height="5.6" fill="#fff" stroke="#6a8a20" stroke-width="0.9"/><circle cx="12.6" cy="3.8" r="1.6" fill="#fff6d8" stroke="#6a8a20" stroke-width="0.8"/></svg>
<div class="t" style="left:48px;top:564.764px;font-family:'Liberation Sans', sans-serif;font-size:14.4px;line-height:16.088px;color:#111;font-weight:normal;font-style:normal;transform:scale(0.98,1.05);transform-origin:0 13.036px;">Lab02_sxp04m</div>
<svg style="position:absolute;left:14px;top:592px;" width="7" height="9" viewBox="0 0 7 9"><path d="M1 0.5 L6 4.5 L1 8.5 Z" fill="#fff" stroke="#8a8a8a"/></svg>
<svg style="position:absolute;left:27px;top:586px;overflow:visible;" width="17" height="18" viewBox="0 0 17 18"><path d="M1.5 13 V4 Q1.5 2.5 3 2.5 L4.5 1.5 H8 L9 2.5 H11 V8 L1.5 13 Z" fill="url(#fg)" stroke="#7888b0" stroke-width="0.8"/><path d="M1.5 13.2 L6.5 8.5 H16 L11.5 13.2 Z" fill="#b8d6f6" stroke="#3a58c0" stroke-width="1.1"/><rect x="10.5" y="0.8" width="5" height="5.6" fill="#fff" stroke="#6a8a20" stroke-width="0.9"/><circle cx="12.6" cy="3.8" r="1.6" fill="#fff6d8" stroke="#6a8a20" stroke-width="0.8"/><path d="M3.5 9.3 L7.4 16.2 Q7.6 17 6.8 17 H0.2 Q-0.6 17 -0.2 16.2 Z" fill="#f6d060" stroke="#c08828" stroke-width="0.9"/><path d="M3.5 11.3 v3" stroke="#222" stroke-width="1.1"/><circle cx="3.5" cy="15.6" r="0.6" fill="#222"/></svg>
<div class="t" style="left:48px;top:587.764px;font-family:'Liberation Sans', sans-serif;font-size:14.4px;line-height:16.088px;color:#111;font-weight:normal;font-style:normal;transform:scale(0.98,1.05);transform-origin:0 13.036px;">Lap03_spx04m</div>
<svg style="position:absolute;left:14px;top:615px;" width="7" height="9" viewBox="0 0 7 9"><path d="M1 0.5 L6 4.5 L1 8.5 Z" fill="#fff" stroke="#8a8a8a"/></svg>
<svg style="position:absolute;left:27px;top:609px;overflow:visible;" width="17" height="18" viewBox="0 0 17 18"><path d="M1.5 13 V4 Q1.5 2.5 3 2.5 L4.5 1.5 H8 L9 2.5 H11 V8 L1.5 13 Z" fill="url(#fg)" stroke="#7888b0" stroke-width="0.8"/><path d="M1.5 13.2 L6.5 8.5 H16 L11.5 13.2 Z" fill="#b8d6f6" stroke="#3a58c0" stroke-width="1.1"/><path d="M14 0.5 V5.5 Q14 7.6 12.2 7.6 Q10.6 7.6 10.6 6" stroke="#fff" stroke-width="3" fill="none"/><path d="M14 0.5 V5.5 Q14 7.6 12.2 7.6 Q10.6 7.6 10.6 6" stroke="#1f5f9f" stroke-width="1.5" fill="none"/><path d="M3.5 9.3 L7.4 16.2 Q7.6 17 6.8 17 H0.2 Q-0.6 17 -0.2 16.2 Z" fill="#f6d060" stroke="#c08828" stroke-width="0.9"/><path d="M3.5 11.3 v3" stroke="#222" stroke-width="1.1"/><circle cx="3.5" cy="15.6" r="0.6" fill="#222"/></svg>
<div class="t" style="left:48px;top:610.764px;font-family:'Liberation Sans', sans-serif;font-size:14.4px;line-height:16.088px;color:#111;font-weight:normal;font-style:normal;transform:scale(1.0407,1.05);transform-origin:0 13.036px;">MscDominoProject</div>
<svg style="position:absolute;left:14px;top:638px;" width="7" height="9" viewBox="0 0 7 9"><path d="M1 0.5 L6 4.5 L1 8.5 Z" fill="#fff" stroke="#8a8a8a"/></svg>
<svg style="position:absolute;left:27px;top:632px;overflow:visible;" width="17" height="18" viewBox="0 0 17 18"><path d="M1.5 13 V4 Q1.5 2.5 3 2.5 L4.5 1.5 H8 L9 2.5 H11 V8 L1.5 13 Z" fill="url(#fg)" stroke="#7888b0" stroke-width="0.8"/><path d="M1.5 13.2 L6.5 8.5 H16 L11.5 13.2 Z" fill="#b8d6f6" stroke="#3a58c0" stroke-width="1.1"/><path d="M14 0.5 V5.5 Q14 7.6 12.2 7.6 Q10.6 7.6 10.6 6" stroke="#fff" stroke-width="3" fill="none"/><path d="M14 0.5 V5.5 Q14 7.6 12.2 7.6 Q10.6 7.6 10.6 6" stroke="#1f5f9f" stroke-width="1.5" fill="none"/><path d="M3.5 9.3 L7.4 16.2 Q7.6 17 6.8 17 H0.2 Q-0.6 17 -0.2 16.2 Z" fill="#f6d060" stroke="#c08828" stroke-width="0.9"/><path d="M3.5 11.3 v3" stroke="#222" stroke-width="1.1"/><circle cx="3.5" cy="15.6" r="0.6" fill="#222"/></svg>
<div class="t" style="left:48px;top:633.764px;font-family:'Liberation Sans', sans-serif;font-size:14.4px;line-height:16.088px;color:#111;font-weight:normal;font-style:normal;transform:scale(1.0343,1.05);transform-origin:0 13.036px;">MscDominoProject2</div>
<svg style="position:absolute;left:14px;top:661px;" width="7" height="9" viewBox="0 0 7 9"><path d="M1 0.5 L6 4.5 L1 8.5 Z" fill="#fff" stroke="#8a8a8a"/></svg>
<svg style="position:absolute;left:27px;top:655px;overflow:visible;" width="17" height="18" viewBox="0 0 17 18"><path d="M1.5 13 V4 Q1.5 2.5 3 2.5 L4.5 1.5 H8 L9 2.5 H11 V8 L1.5 13 Z" fill="url(#fg)" stroke="#7888b0" stroke-width="0.8"/><path d="M1.5 13.2 L6.5 8.5 H16 L11.5 13.2 Z" fill="#b8d6f6" stroke="#3a58c0" stroke-width="1.1"/><path d="M14 0.5 V5.5 Q14 7.6 12.2 7.6 Q10.6 7.6 10.6 6" stroke="#fff" stroke-width="3" fill="none"/><path d="M14 0.5 V5.5 Q14 7.6 12.2 7.6 Q10.6 7.6 10.6 6" stroke="#1f5f9f" stroke-width="1.5" fill="none"/></svg>
<div class="t" style="left:48px;top:656.764px;font-family:'Liberation Sans', sans-serif;font-size:14.4px;line-height:16.088px;color:#111;font-weight:normal;font-style:normal;transform:scale(1.0011,1.05);transform-origin:0 13.036px;">ServerClientTest</div>
<svg style="position:absolute;left:14px;top:684px;" width="7" height="9" viewBox="0 0 7 9"><path d="M1 0.5 L6 4.5 L1 8.5 Z" fill="#fff" stroke="#8a8a8a"/></svg>
<svg style="position:absolute;left:27px;top:678px;overflow:visible;" width="17" height="18" viewBox="0 0 17 18"><path d="M1.5 13 V4 Q1.5 2.5 3 2.5 L4.5 1.5 H8 L9 2.5 H11 V8 L1.5 13 Z" fill="url(#fg)" stroke="#7888b0" stroke-width="0.8"/><path d="M1.5 13.2 L6.5 8.5 H16 L11.5 13.2 Z" fill="#b8d6f6" stroke="#3a58c0" stroke-width="1.1"/><rect x="10.5" y="0.8" width="5" height="5.6" fill="#fff" stroke="#6a8a20" stroke-width="0.9"/><circle cx="12.6" cy="3.8" r="1.6" fill="#fff6d8" stroke="#6a8a20" stroke-width="0.8"/><path d="M3.5 9.3 L7.4 16.2 Q7.6 17 6.8 17 H0.2 Q-0.6 17 -0.2 16.2 Z" fill="#f6d060" stroke="#c08828" stroke-width="0.9"/><path d="M3.5 11.3 v3" stroke="#222" stroke-width="1.1"/><circle cx="3.5" cy="15.6" r="0.6" fill="#222"/></svg>
<div class="t" style="left:48px;top:679.764px;font-family:'Liberation Sans', sans-serif;font-size:14.4px;line-height:16.088px;color:#111;font-weight:normal;font-style:normal;transform:scale(1.0078,1.05);transform-origin:0 13.036px;">Stopwatch_Coursework</div>
</div>
<div style="position:absolute;left:4px;top:980px;width:309px;height:19px;background:#f0f0f0;"></div>
<div style="position:absolute;left:26px;top:980px;width:209px;height:19px;background:#cdcdcd;"></div>
<svg style="position:absolute;left:10px;top:984px;" width="9" height="11" viewBox="0 0 9 11"><path d="M7 1 L2 5.5 L7 10" stroke="#606060" stroke-width="1.8" fill="none"/></svg>
<svg style="position:absolute;left:298px;top:984px;" width="9" height="11" viewBox="0 0 9 11"><path d="M2 1 L7 5.5 L2 10" stroke="#606060" stroke-width="1.8" fill="none"/></svg>
<div style="position:absolute;left:320px;top:93px;width:1430px;height:268px;background:#fff;border:1px solid #e6eaf2;box-sizing:border-box;border-radius:7px;"></div>
<svg style="position:absolute;left:327px;top:101px;" width="14" height="16" viewBox="0 0 14 16"><path d="M1.5 0.5 h8 l3 3 v11 h-11 Z" fill="#fbfbfb" stroke="#9aa8c0"/><path d="M8.5 4 v5.5 q0 2.5 -2.8 2.5" stroke="#5a7ac0" stroke-width="1.5" fill="none"/></svg>
<div class="t" style="left:344.5px;top:101.664px;font-family:'Liberation Sans', sans-serif;font-size:14.4px;line-height:16.088px;color:#666;font-weight:normal;font-style:normal;transform:scale(1.0,1.05);transform-origin:0 13.036px;">selectionScreen.java</div>
<div style="position:absolute;left:503px;top:93px;width:124px;height:29px;background:linear-gradient(#e2e4ea,#f6f7f9 60%,#fff);border-radius:7px 7px 0 0;border-left:1px solid #d8dce4;border-right:1px solid #d8dce4;box-sizing:border-box;"></div>
<svg style="position:absolute;left:507px;top:101px;" width="14" height="16" viewBox="0 0 14 16"><path d="M1.5 0.5 h8 l3 3 v11 h-11 Z" fill="#fbfbfb" stroke="#9aa8c0"/><path d="M8.5 4 v5.5 q0 2.5 -2.8 2.5" stroke="#5a7ac0" stroke-width="1.5" fill="none"/><path d="M3.5 9 L7 15.5 H0 Z" fill="#f8c440" stroke="#a07010" stroke-width="0.8"/><path d="M3.5 11 v2.5" stroke="#333" stroke-width="1"/></svg>
<div class="t" style="left:526px;top:101.664px;font-family:'Liberation Sans', sans-serif;font-size:14.4px;line-height:16.088px;color:#111;font-weight:normal;font-style:normal;transform:scale(1.0,1.05);transform-origin:0 13.036px;">*Game.java</div>
<svg style="position:absolute;left:608px;top:103px;" width="12" height="12" viewBox="0 0 12 12"><path d="M2 2 L10 10 M10 2 L2 10" stroke="#909090" stroke-width="3"/><path d="M2 2 L10 10 M10 2 L2 10" stroke="#fff" stroke-width="1.2"/></svg>
<svg style="position:absolute;left:631px;top:101px;" width="14" height="16" viewBox="0 0 14 16"><path d="M1.5 0.5 h8 l3 3 v11 h-11 Z" fill="#fbfbfb" stroke="#9aa8c0"/><path d="M8.5 4 v5.5 q0 2.5 -2.8 2.5" stroke="#5a7ac0" stroke-width="1.5" fill="none"/><path d="M3.5 9 L7 15.5 H0 Z" fill="#f8c440" stroke="#a07010" stroke-width="0.8"/><path d="M3.5 11 v2.5" stroke="#333" stroke-width="1"/></svg>
<div class="t" style="left:650px;top:101.664px;font-family:'Liberation Sans', sans-serif;font-size:14.4px;line-height:16.088px;color:#666;font-weight:normal;font-style:normal;transform:scale(1.0,1.05);transform-origin:0 13.036px;">GUI.java</div>
<svg style="position:absolute;left:736px;top:101px;" width="14" height="16" viewBox="0 0 14 16"><path d="M1.5 0.5 h8 l3 3 v11 h-11 Z" fill="#fbfbfb" stroke="#9aa8c0"/><path d="M8.5 4 v5.5 q0 2.5 -2.8 2.5" stroke="#5a7ac0" stroke-width="1.5" fill="none"/></svg>
<div class="t" style="left:753.5px;top:101.664px;font-family:'Liberation Sans', sans-serif;font-size:14.4px;line-height:16.088px;color:#666;font-weight:normal;font-style:normal;transform:scale(1.0,1.05);transform-origin:0 13.036px;">firstScreen.java</div>
<div style="position:absolute;left:323px;top:129px;width:12px;height:199px;background:repeating-conic-gradient(#4f9cf0 0 25%,#b4d6fa 0 50%) 0 0/2px 2px;"></div>
<div style="position:absolute;left:323px;top:123px;width:12px;height:6px;background:#fff;"></div>
<div style="position:absolute;left:380px;top:123px;width:1px;height:215px;background:#f0f0f0;"></div>
<div style="position:absolute;left:383px;top:209px;width:522px;height:20px;background:#e8f2fe;"></div>
<div style="position:absolute;left:335px;top:209px;width:36px;height:20px;background:#f0e0ee;"></div>
<div style="position:absolute;left:335px;top:187px;width:36px;height:2px;background:#000;"></div>
<div style="position:absolute;left:335px;top:228px;width:36px;height:2px;background:#000;"></div>
<div class="t m" style="left:353px;top:132.012px;font-family:'Liberation Mono', monospace;font-size:15px;line-height:16.992px;color:#787878;font-weight:normal;font-style:normal;">59</div>
<div class="t m" style="left:353px;top:152.012px;font-family:'Liberation Mono', monospace;font-size:15px;line-height:16.992px;color:#787878;font-weight:normal;font-style:normal;">60</div>
<div class="t m" style="left:353px;top:172.012px;font-family:'Liberation Mono', monospace;font-size:15px;line-height:16.992px;color:#787878;font-weight:normal;font-style:normal;">61</div>
<div class="t m" style="left:353px;top:192.012px;font-family:'Liberation Mono', monospace;font-size:15px;line-height:16.992px;color:#787878;font-weight:normal;font-style:normal;">62</div>
<div class="t m" style="left:353px;top:212.012px;font-family:'Liberation Mono', monospace;font-size:15px;line-height:16.992px;color:#787878;font-weight:normal;font-style:normal;">63</div>
<div class="t m" style="left:353px;top:232.012px;font-family:'Liberation Mono', monospace;font-size:15px;line-height:16.992px;color:#787878;font-weight:normal;font-style:normal;">64</div>
<div class="t m" style="left:353px;top:252.012px;font-family:'Liberation Mono', monospace;font-size:15px;line-height:16.992px;color:#787878;font-weight:normal;font-style:normal;">65</div>
<div class="t m" style="left:353px;top:272.012px;font-family:'Liberation Mono', monospace;font-size:15px;line-height:16.992px;color:#787878;font-weight:normal;font-style:normal;">66</div>
<div class="t m" style="left:353px;top:292.012px;font-family:'Liberation Mono', monospace;font-size:15px;line-height:16.992px;color:#787878;font-weight:normal;font-style:normal;">67</div>
<div class="t m" style="left:353px;top:312.012px;font-family:'Liberation Mono', monospace;font-size:15px;line-height:16.992px;color:#787878;font-weight:normal;font-style:normal;">68</div>
<div style="position:absolute;left:335px;top:328px;width:40px;height:9px;overflow:hidden;">
<div class="t m" style="left:353px;top:4.012px;font-family:'Liberation Mono', monospace;font-size:15px;line-height:16.992px;color:#787878;font-weight:normal;font-style:normal;">69</div>
</div>
<svg style="position:absolute;left:372px;top:135px;" width="9" height="9" viewBox="0 0 9 9"><circle cx="4.5" cy="4.5" r="3.8" fill="#fff" stroke="#a0a8b8"/><path d="M2.5 4.5 h4" stroke="#7080a0"/></svg>
<div class="t m" style="left:419px;top:132.012px;font-family:'Liberation Mono', monospace;font-size:15px;line-height:16.992px;color:#000;font-weight:normal;font-style:normal;"><span style="color:#7f0055;font-weight:bold;">public</span> <span style="color:#7f0055;font-weight:bold;">static</span> <span style="color:#7f0055;font-weight:bold;">void</span> main(String[] <span style="color:#6a3e3e;">args</span>) <span style="color:#7f0055;font-weight:bold;">throws</span> Exceptio</div>
<div class="t m" style="left:419px;top:152.012px;font-family:'Liberation Mono', monospace;font-size:15px;line-height:16.992px;color:#000;font-weight:normal;font-style:normal;">{</div>
<div class="t m" style="left:455px;top:192.012px;font-family:'Liberation Mono', monospace;font-size:15px;line-height:16.992px;color:#000;font-weight:normal;font-style:normal;"><span style="color:#3f7f5f;">//firstScreen fs = new firstScreen();</span></div>
<svg style="position:absolute;left:581px;top:206px;" width="19" height="4" viewBox="0 0 19 4"><path d="M0 3 l2 -2 l2 2 l2 -2 l2 2 l2 -2 l2 2 l2 -2 l2 2 l2 -2" stroke="#e04040" stroke-width="0.9" fill="none"/></svg>
<div class="t m" style="left:455px;top:232.012px;font-family:'Liberation Mono', monospace;font-size:15px;line-height:16.992px;color:#000;font-weight:normal;font-style:normal;"><span style="color:#0000c0;font-style:italic;">gui</span>.setVisible(<span style="color:#7f0055;font-weight:bold;">true</span>);</div>
<div class="t m" style="left:455px;top:272.012px;font-family:'Liberation Mono', monospace;font-size:15px;line-height:16.992px;color:#000;font-weight:normal;font-style:normal;"><span style="color:#3f7f5f;">// method below is will be called when the player</span></div>
<div class="t m" style="left:455px;top:292.012px;font-family:'Liberation Mono', monospace;font-size:15px;line-height:16.992px;color:#000;font-weight:normal;font-style:normal;"><span style="font-style:italic;">playerVsAI(</span><span style="color:#0000c0;font-style:italic;">playerOne</span>, <span style="color:#0000c0;font-style:italic;">playerTwo</span>, <span style="color:#0000c0;font-style:italic;">t</span>, <span style="color:#0000c0;font-style:italic;">boneyard</span>, <span style="color:#0000c0;font-style:italic;">game</span></div>
<div class="t m" style="left:419px;top:312.012px;font-family:'Liberation Mono', monospace;font-size:15px;line-height:16.992px;color:#000;font-weight:normal;font-style:normal;">}</div>
<div style="position:absolute;left:323px;top:338px;width:58px;height:20px;background:#f8f8f8;border-radius:0 0 0 5px;"></div>
<div style="position:absolute;left:381px;top:338px;width:1368px;height:20px;background:#f0f0f0;"></div>
<svg style="position:absolute;left:386px;top:342px;" width="9" height="11" viewBox="0 0 9 11"><path d="M7 1 L2 5.5 L7 10" stroke="#b0b0b0" stroke-width="1.8" fill="none"/></svg>
<div style="position:absolute;left:1716px;top:123px;width:18px;height:215px;background:#f0f0f0;"></div>
<div style="position:absolute;left:1716px;top:150px;width:18px;height:21px;background:#cdcdcd;"></div>
<svg style="position:absolute;left:1720px;top:130px;" width="11" height="8" viewBox="0 0 11 8"><path d="M1 7 L5.5 2 L10 7" stroke="#606060" stroke-width="1.8" fill="none"/></svg>
<svg style="position:absolute;left:1720px;top:322px;" width="11" height="8" viewBox="0 0 11 8"><path d="M1 1 L5.5 6 L10 1" stroke="#606060" stroke-width="1.8" fill="none"/></svg>
<div style="position:absolute;left:1734px;top:123px;width:14px;height:215px;background:#f8f8f8;"></div>
<div style="position:absolute;left:1736px;top:128px;width:9px;height:9px;background:#f6b830;border:1px solid #d8a040;box-sizing:border-box;"></div>
<div style="position:absolute;left:1736px;top:147px;width:9px;height:4px;border:1px solid #f0d070;background:#fff8d0;box-sizing:border-box;"></div>
<div style="position:absolute;left:1736px;top:156px;width:9px;height:4px;border:1px solid #f0d070;background:#fff8d0;box-sizing:border-box;"></div>
<div style="position:absolute;left:1736px;top:210px;width:9px;height:4px;border:1px solid #f0d070;background:#fff8d0;box-sizing:border-box;"></div>
<div style="position:absolute;left:1736px;top:220px;width:9px;height:4px;border:1px solid #f0d070;background:#fff8d0;box-sizing:border-box;"></div>
<div style="position:absolute;left:1736px;top:224px;width:9px;height:4px;border:1px solid #f0d070;background:#fff8d0;box-sizing:border-box;"></div>
<div style="position:absolute;left:1736px;top:238px;width:9px;height:4px;border:1px solid #f0d070;background:#fff8d0;box-sizing:border-box;"></div>
<div style="position:absolute;left:1736px;top:243px;width:9px;height:4px;border:1px solid #f0d070;background:#fff8d0;box-sizing:border-box;"></div>
<div style="position:absolute;left:1736px;top:248px;width:9px;height:4px;border:1px solid #f0d070;background:#fff8d0;box-sizing:border-box;"></div>
<div style="position:absolute;left:1725px;top:100px;width:11px;height:11px;border:1px solid #555;border-top:2px solid #555;box-sizing:border-box;"></div>
<div style="position:absolute;left:320px;top:366px;width:1430px;height:637px;background:#fff;border:1px solid #bcc5d6;box-sizing:border-box;border-radius:7px;"></div>
<div style="position:absolute;left:321px;top:367px;width:1428px;height:28px;background:#d3e0f1;border-radius:7px 7px 0 0;"></div>
<div style="position:absolute;left:321px;top:394px;width:1428px;height:1px;background:#b8c6da;"></div>
<svg style="position:absolute;left:325px;top:373px;" width="17" height="17" viewBox="0 0 17 17"><rect x="4" y="1" width="10" height="14" fill="#fff" stroke="#8a94a8"/><circle cx="6" cy="5" r="3" fill="#e03030"/><rect x="0" y="8" width="7.5" height="7.5" fill="#e03030"/><path d="M2 10 L5.5 13.5 M5.5 10 L2 13.5" stroke="#fff" stroke-width="1.1"/></svg>
<div class="t" style="left:344.5px;top:374.464px;font-family:'Liberation Sans', sans-serif;font-size:14.4px;line-height:16.088px;color:#111;font-weight:normal;font-style:normal;transform:scale(1.0,1.05);transform-origin:0 13.036px;">Problems</div>
<div class="t" style="left:419px;top:375.231px;font-family:'Liberation Sans', sans-serif;font-size:13px;line-height:14.524px;color:#3a6ab0;font-weight:normal;font-style:normal;">@</div>
<div class="t" style="left:436.5px;top:374.464px;font-family:'Liberation Sans', sans-serif;font-size:14.4px;line-height:16.088px;color:#111;font-weight:normal;font-style:normal;transform:scale(1.0,1.05);transform-origin:0 13.036px;">Javadoc</div>
<svg style="position:absolute;left:499px;top:373px;" width="16" height="17" viewBox="0 0 16 17"><path d="M1.5 0.5 h7 l3 3 v10 h-10 Z" fill="#fff" stroke="#c09040"/><path d="M4 5 q-1.5 1.5 0 3 M7 5 q1.5 1.5 0 3" stroke="#5a7ac0" fill="none"/><path d="M8 10 h4 v-2 l4 4 l-4 4 v-2 h-4 Z" fill="#f6c850" stroke="#c08020" stroke-width="0.8"/></svg>
<div class="t" style="left:519px;top:374.464px;font-family:'Liberation Sans', sans-serif;font-size:14.4px;line-height:16.088px;color:#111;font-weight:normal;font-style:normal;transform:scale(1.0,1.05);transform-origin:0 13.036px;">Declaration</div>
<div style="position:absolute;left:603px;top:367px;width:101px;height:29px;background:#fff;border-radius:7px 7px 0 0;border:1px solid #c0cadb;border-bottom:none;box-sizing:border-box;"></div>
<svg style="position:absolute;left:608px;top:373px;" width="16" height="15" viewBox="0 0 16 15"><rect x="1" y="1" width="14" height="10" fill="#e8f0fa" stroke="#3a6aa0" stroke-width="1.4"/><path d="M4 4 h6 M4 7 h5" stroke="#3a6aa0"/><rect x="4" y="12" width="8" height="2.5" fill="#3a6aa0"/></svg>
<div class="t" style="left:625px;top:374.464px;font-family:'Liberation Sans', sans-serif;font-size:14.4px;line-height:16.088px;color:#111;font-weight:normal;font-style:normal;transform:scale(1.0,1.05);transform-origin:0 13.036px;">Console</div>
<svg style="position:absolute;left:684px;top:376px;" width="12" height="12" viewBox="0 0 12 12"><path d="M2 2 L10 10 M10 2 L2 10" stroke="#909090" stroke-width="3"/><path d="M2 2 L10 10 M10 2 L2 10" stroke="#fff" stroke-width="1.2"/></svg>
<div style="position:absolute;left:1725px;top:373px;width:11px;height:11px;border:1px solid #555;border-top:2px solid #555;box-sizing:border-box;"></div>
<div class="t" style="left:323px;top:399.62px;font-family:'Liberation Sans', sans-serif;font-size:14.78px;line-height:16.512px;color:#111;font-weight:normal;font-style:normal;transform:scale(1.0,1.03);transform-origin:0 13.38px;">Game (3) [Java Application] C:\Program Files\Java\jre1.8.0_51\bin\javaw.exe (30 Aug 2015 06:00:12)</div>
<div style="position:absolute;left:323px;top:417px;width:1424px;height:1px;background:#a0a0a0;"></div>
<div class="t m" style="left:325px;top:418.512px;font-family:'Liberation Mono', monospace;font-size:15px;line-height:16.992px;color:#000;font-weight:normal;font-style:normal;">-------------------</div>
<div class="t m" style="left:325px;top:438.512px;font-family:'Liberation Mono', monospace;font-size:15px;line-height:16.992px;color:#000;font-weight:normal;font-style:normal;">Player 1 CURRENT HAND IS : [[2,2], [1,1], [6,2], [5,2], [4,3], [5,1]</div>
<div class="t m" style="left:325px;top:458.512px;font-family:'Liberation Mono', monospace;font-size:15px;line-height:16.992px;color:#000;font-weight:normal;font-style:normal;">false</div>
<div class="t m" style="left:325px;top:478.512px;font-family:'Liberation Mono', monospace;font-size:15px;line-height:16.992px;color:#000;font-weight:normal;font-style:normal;">0</div>
<div class="t m" style="left:325px;top:498.512px;font-family:'Liberation Mono', monospace;font-size:15px;line-height:16.992px;color:#000;font-weight:normal;font-style:normal;">TILES WHICH YOU CAN PLAY [6|2] PRESS 2</div>
<div class="t m" style="left:325px;top:518.513px;font-family:'Liberation Mono', monospace;font-size:15px;line-height:16.992px;color:#000;font-weight:normal;font-style:normal;">numPossibleTiles1</div>
<div class="t m" style="left:325px;top:538.513px;font-family:'Liberation Mono', monospace;font-size:15px;line-height:16.992px;color:#000;font-weight:normal;font-style:normal;">temp Array[[6,2]]</div>
<div class="t m" style="left:325px;top:558.513px;font-family:'Liberation Mono', monospace;font-size:15px;line-height:16.992px;color:#000;font-weight:normal;font-style:normal;">C</div>
<div class="t m" style="left:325px;top:578.513px;font-family:'Liberation Mono', monospace;font-size:15px;line-height:16.992px;color:#000;font-weight:normal;font-style:normal;">pick number you want to add</div>
<div class="t m" style="left:325px;top:598.513px;font-family:'Liberation Mono', monospace;font-size:15px;line-height:16.992px;color:#1ec81e;font-weight:normal;font-style:normal;">2</div>
<div class="t m" style="left:325px;top:618.513px;font-family:'Liberation Mono', monospace;font-size:15px;line-height:16.992px;color:#000;font-weight:normal;font-style:normal;"> pick location Left - l or Right- r</div>
<div class="t m" style="left:325px;top:638.513px;font-family:'Liberation Mono', monospace;font-size:15px;line-height:16.992px;color:#1ec81e;font-weight:normal;font-style:normal;">L</div>
<div class="t m" style="left:325px;top:658.513px;font-family:'Liberation Mono', monospace;font-size:15px;line-height:16.992px;color:#000;font-weight:normal;font-style:normal;">Loading src/resources/bone26.png</div>
<div class="t m" style="left:325px;top:678.513px;font-family:'Liberation Mono', monospace;font-size:15px;line-height:16.992px;color:#000;font-weight:normal;font-style:normal;">GAMEBOARDX IS : [[2,6], [6,6]]</div>
<div class="t m" style="left:325px;top:698.513px;font-family:'Liberation Mono', monospace;font-size:15px;line-height:16.992px;color:#000;font-weight:normal;font-style:normal;">GAMEBOARDY IS : [[6,6]]</div>
<div class="t m" style="left:325px;top:718.513px;font-family:'Liberation Mono', monospace;font-size:15px;line-height:16.992px;color:#000;font-weight:normal;font-style:normal;">SCORE x14</div>
<div class="t m" style="left:325px;top:738.513px;font-family:'Liberation Mono', monospace;font-size:15px;line-height:16.992px;color:#000;font-weight:normal;font-style:normal;">14ASDFFF</div>
<div class="t m" style="left:325px;top:758.513px;font-family:'Liberation Mono', monospace;font-size:15px;line-height:16.992px;color:#000;font-weight:normal;font-style:normal;">CURRENT SCORE IS 0</div>
<div class="t m" style="left:325px;top:778.513px;font-family:'Liberation Mono', monospace;font-size:15px;line-height:16.992px;color:#000;font-weight:normal;font-style:normal;">---------------------</div>
<div class="t m" style="left:325px;top:798.513px;font-family:'Liberation Mono', monospace;font-size:15px;line-height:16.992px;color:#000;font-weight:normal;font-style:normal;"> TURN NUMBER: 2</div>
<div class="t m" style="left:325px;top:818.513px;font-family:'Liberation Mono', monospace;font-size:15px;line-height:16.992px;color:#000;font-weight:normal;font-style:normal;">-------------------</div>
<div class="t m" style="left:325px;top:838.513px;font-family:'Liberation Mono', monospace;font-size:15px;line-height:16.992px;color:#000;font-weight:normal;font-style:normal;">Player 2 CURRENT HAND IS : [[6,4], [3,0], [6,5], [2,0], [6,1], [3,2</div>
<div class="t m" style="left:325px;top:858.513px;font-family:'Liberation Mono', monospace;font-size:15px;line-height:16.992px;color:#000;font-weight:normal;font-style:normal;">false</div>
<div class="t m" style="left:325px;top:878.513px;font-family:'Liberation Mono', monospace;font-size:15px;line-height:16.992px;color:#000;font-weight:normal;font-style:normal;">Loading src/resources/bone46.png</div>
<div class="t m" style="left:325px;top:898.513px;font-family:'Liberation Mono', monospace;font-size:15px;line-height:16.992px;color:#000;font-weight:normal;font-style:normal;">PLAYING THE TILE [6,4] TO THE RIGHT POSITION</div>
<div class="t m" style="left:325px;top:918.513px;font-family:'Liberation Mono', monospace;font-size:15px;line-height:16.992px;color:#000;font-weight:normal;font-style:normal;">1</div>
<div class="t m" style="left:325px;top:938.513px;font-family:'Liberation Mono', monospace;font-size:15px;line-height:16.992px;color:#000;font-weight:normal;font-style:normal;">GAMEBOARDX IS : [[2,6], [6,6], [6,4]]</div>
<div class="t m" style="left:325px;top:958.513px;font-family:'Liberation Mono', monospace;font-size:15px;line-height:16.992px;color:#000;font-weight:normal;font-style:normal;">GAMEBOARDY IS : [[6,6]]</div>
<div style="position:absolute;left:1727px;top:420px;width:20px;height:559px;background:#f0f0f0;"></div>
<div style="position:absolute;left:1727px;top:614px;width:20px;height:209px;background:#cdcdcd;"></div>
<svg style="position:absolute;left:1731px;top:426px;" width="12" height="8" viewBox="0 0 12 8"><path d="M1 7 L6 2 L11 7" stroke="#606060" stroke-width="1.8" fill="none"/></svg>
<svg style="position:absolute;left:1731px;top:964px;" width="12" height="8" viewBox="0 0 12 8"><path d="M1 1 L6 6 L11 1" stroke="#606060" stroke-width="1.8" fill="none"/></svg>
<div style="position:absolute;left:321px;top:980px;width:1426px;height:19px;background:#f0f0f0;"></div>
<svg style="position:absolute;left:328px;top:984px;" width="9" height="11" viewBox="0 0 9 11"><path d="M7 1 L2 5.5 L7 10" stroke="#b0b0b0" stroke-width="1.8" fill="none"/></svg>
<svg style="position:absolute;left:1710px;top:984px;" width="9" height="11" viewBox="0 0 9 11"><path d="M2 1 L7 5.5 L2 10" stroke="#b0b0b0" stroke-width="1.8" fill="none"/></svg>
<div style="position:absolute;left:1754px;top:93px;width:162px;height:910px;background:#fff;border:1px solid #bcc5d6;box-sizing:border-box;border-radius:7px;"></div>
<div style="position:absolute;left:1755px;top:94px;width:96px;height:28px;background:linear-gradient(#e2e4ea,#f6f7f9 60%,#fff);border-radius:7px 7px 0 0;border-right:1px solid #d8dce4;"></div>
<svg style="position:absolute;left:1759px;top:102px;" width="14" height="14" viewBox="0 0 14 14"><rect x="0.5" y="0.5" width="5" height="5" fill="#fff" stroke="#3a7ac0"/><rect x="0.5" y="8.5" width="5" height="5" fill="#fff" stroke="#3a7ac0"/><path d="M3 5.5 v3 M7 3 h6 M9 7 h2 M7 11 h6" stroke="#3a7ac0"/></svg>
<div class="t" style="left:1779px;top:101.302px;font-family:'Liberation Sans', sans-serif;font-size:14.8px;line-height:16.535px;color:#111;font-weight:normal;font-style:normal;transform:scale(1.0,1.05);transform-origin:0 13.398px;">Outline</div>
<svg style="position:absolute;left:1833px;top:103px;" width="12" height="12" viewBox="0 0 12 12"><path d="M2 2 L10 10 M10 2 L2 10" stroke="#909090" stroke-width="3"/><path d="M2 2 L10 10 M10 2 L2 10" stroke="#fff" stroke-width="1.2"/></svg>
<div style="position:absolute;left:1868px;top:100px;width:10px;height:4px;border:1px solid #555;box-sizing:border-box;"></div>
<div style="position:absolute;left:1891px;top:100px;width:11px;height:11px;border:1px solid #555;border-top:2px solid #555;box-sizing:border-box;"></div>
<svg style="position:absolute;left:1767px;top:129px;" width="14" height="14" viewBox="0 0 14 14"><rect x="0.5" y="0.5" width="10" height="10" fill="#e8eef8" stroke="#a0b0c8"/><rect x="3.5" y="3.5" width="10" height="10" fill="#f4f8fc" stroke="#8090a8"/><path d="M5.5 8.5 h6" stroke="#2a4a90" stroke-width="1.5"/></svg>
<svg style="position:absolute;left:1789px;top:128px;" width="16" height="16" viewBox="0 0 16 16"><path d="M3 3 v12 M0.5 12 L3 15 L5.5 12" stroke="#444" fill="none" stroke-width="1.1"/><text x="6" y="8" font-size="9" font-weight="bold" font-family="Liberation Sans" fill="#3a8a50">a</text><text x="8" y="16" font-size="9" font-weight="bold" font-family="Liberation Sans" fill="#8040a0">z</text></svg>
<svg style="position:absolute;left:1812px;top:129px;" width="15" height="15" viewBox="0 0 15 15"><circle cx="7" cy="8" r="5" fill="#5aa8e0"/><path d="M1 1 L14 14" stroke="#1c3c90" stroke-width="1.3"/></svg>
<svg style="position:absolute;left:1834px;top:128px;" width="16" height="16" viewBox="0 0 16 16"><circle cx="6" cy="10" r="4" fill="#909090"/><path d="M1 4 L13 15" stroke="#1c3c90" stroke-width="1.3"/><text x="10" y="7" font-size="7" font-family="Liberation Sans" fill="#3a6ab0">S</text></svg>
<svg style="position:absolute;left:1859px;top:131px;" width="10" height="10" viewBox="0 0 10 10"><circle cx="5" cy="5" r="4.2" fill="#5ab050" stroke="#3a8a40"/></svg>
<svg style="position:absolute;left:1880px;top:128px;" width="16" height="16" viewBox="0 0 16 16"><circle cx="6" cy="10" r="4" fill="#909090"/><path d="M1 4 L13 15" stroke="#1c3c90" stroke-width="1.3"/><text x="10" y="7" font-size="7" font-family="Liberation Sans" fill="#3a6ab0">L</text></svg>
<div style="position:absolute;left:1902px;top:127px;width:1px;height:16px;background:#7a7a7a;"></div>
<svg style="position:absolute;left:1771px;top:155px;" width="11" height="7" viewBox="0 0 11 7"><path d="M0.5 0.5 H10.5 L5.5 6 Z" fill="#fff" stroke="#555"/></svg>
<div class="t" style="left:1760px;top:175.464px;font-family:'Liberation Sans', sans-serif;font-size:14.4px;line-height:16.088px;color:#111;font-weight:normal;font-style:normal;transform:scale(1.0,1.05);transform-origin:0 13.036px;">Game</div>
<div style="position:absolute;left:1756px;top:172px;width:137px;height:807px;overflow:hidden;">
<div style="position:absolute;left:1px;top:438px;width:136px;height:1px;background:#e0e0e0;"></div>
<div style="position:absolute;left:1px;top:461px;width:136px;height:1px;background:#e0e0e0;"></div>
<div style="position:absolute;left:1px;top:439px;width:136px;height:22px;background:#f4f4f4;"></div>
<svg style="position:absolute;left:7px;top:30.5px;" width="9" height="9" viewBox="0 0 9 9"><path d="M4.5 1.2 L7.8 7.2 H1.2 Z" fill="none" stroke="#1f5fa8" stroke-width="1.5"/></svg>
<div class="t" style="left:12px;top:23.352px;font-family:'Liberation Sans', sans-serif;font-size:9px;line-height:10.055px;color:#c8102e;font-weight:normal;font-style:normal;">S</div>
<div class="t" style="left:20px;top:23.352px;font-family:'Liberation Sans', sans-serif;font-size:9px;line-height:10.055px;color:#1f5fa8;font-weight:normal;font-style:normal;">F</div>
<div class="t" style="left:29px;top:26.464px;font-family:'Liberation Sans', sans-serif;font-size:14.4px;line-height:16.088px;color:#111;font-weight:normal;font-style:normal;transform:scale(1.0,1.05);transform-origin:0 13.036px;">numPlayers<span style="color:#a08850"> : int</span></div>
<svg style="position:absolute;left:7px;top:53.5px;" width="9" height="9" viewBox="0 0 9 9"><path d="M4.5 1.2 L7.8 7.2 H1.2 Z" fill="none" stroke="#1f5fa8" stroke-width="1.5"/></svg>
<div class="t" style="left:19px;top:46.352px;font-family:'Liberation Sans', sans-serif;font-size:9px;line-height:10.055px;color:#c8102e;font-weight:normal;font-style:normal;">S</div>
<div class="t" style="left:29px;top:49.464px;font-family:'Liberation Sans', sans-serif;font-size:14.4px;line-height:16.088px;color:#111;font-weight:normal;font-style:normal;transform:scale(1.0,1.05);transform-origin:0 13.036px;">fileNameStarting</div>
<svg style="position:absolute;left:7px;top:76.5px;" width="9" height="9" viewBox="0 0 9 9"><path d="M4.5 1.2 L7.8 7.2 H1.2 Z" fill="none" stroke="#1f5fa8" stroke-width="1.5"/></svg>
<div class="t" style="left:19px;top:69.352px;font-family:'Liberation Sans', sans-serif;font-size:9px;line-height:10.055px;color:#c8102e;font-weight:normal;font-style:normal;">S</div>
<div class="t" style="left:29px;top:72.464px;font-family:'Liberation Sans', sans-serif;font-size:14.4px;line-height:16.088px;color:#111;font-weight:normal;font-style:normal;transform:scale(1.0,1.05);transform-origin:0 13.036px;">fileNameEnding</div>
<svg style="position:absolute;left:8px;top:98.5px;" width="9" height="9" viewBox="0 0 9 9"><circle cx="4.5" cy="4.5" r="2.6" fill="none" stroke="#2a8a40" stroke-width="1.4"/></svg>
<div class="t" style="left:19px;top:92.352px;font-family:'Liberation Sans', sans-serif;font-size:9px;line-height:10.055px;color:#c8102e;font-weight:normal;font-style:normal;">S</div>
<div class="t" style="left:29px;top:95.464px;font-family:'Liberation Sans', sans-serif;font-size:14.4px;line-height:16.088px;color:#111;font-weight:normal;font-style:normal;transform:scale(1.0,1.05);transform-origin:0 13.036px;">startingXVertical</div>
<svg style="position:absolute;left:8px;top:121.5px;" width="9" height="9" viewBox="0 0 9 9"><circle cx="4.5" cy="4.5" r="2.6" fill="none" stroke="#2a8a40" stroke-width="1.4"/></svg>
<div class="t" style="left:19px;top:115.352px;font-family:'Liberation Sans', sans-serif;font-size:9px;line-height:10.055px;color:#c8102e;font-weight:normal;font-style:normal;">S</div>
<div class="t" style="left:29px;top:118.464px;font-family:'Liberation Sans', sans-serif;font-size:14.4px;line-height:16.088px;color:#111;font-weight:normal;font-style:normal;transform:scale(1.0,1.05);transform-origin:0 13.036px;">playerOneScoreI</div>
<svg style="position:absolute;left:8px;top:144.5px;" width="9" height="9" viewBox="0 0 9 9"><circle cx="4.5" cy="4.5" r="2.6" fill="none" stroke="#2a8a40" stroke-width="1.4"/></svg>
<div class="t" style="left:19px;top:138.352px;font-family:'Liberation Sans', sans-serif;font-size:9px;line-height:10.055px;color:#c8102e;font-weight:normal;font-style:normal;">S</div>
<div class="t" style="left:29px;top:141.464px;font-family:'Liberation Sans', sans-serif;font-size:14.4px;line-height:16.088px;color:#111;font-weight:normal;font-style:normal;transform:scale(1.0,1.05);transform-origin:0 13.036px;">playerTwoScore</div>
<svg style="position:absolute;left:8px;top:167.5px;" width="9" height="9" viewBox="0 0 9 9"><circle cx="4.5" cy="4.5" r="2.6" fill="none" stroke="#2a8a40" stroke-width="1.4"/></svg>
<div class="t" style="left:19px;top:161.352px;font-family:'Liberation Sans', sans-serif;font-size:9px;line-height:10.055px;color:#c8102e;font-weight:normal;font-style:normal;">S</div>
<div class="t" style="left:29px;top:164.464px;font-family:'Liberation Sans', sans-serif;font-size:14.4px;line-height:16.088px;color:#111;font-weight:normal;font-style:normal;transform:scale(1.0,1.05);transform-origin:0 13.036px;">playerOneScore</div>
<svg style="position:absolute;left:8px;top:190.5px;" width="9" height="9" viewBox="0 0 9 9"><circle cx="4.5" cy="4.5" r="2.6" fill="none" stroke="#2a8a40" stroke-width="1.4"/></svg>
<div class="t" style="left:19px;top:184.352px;font-family:'Liberation Sans', sans-serif;font-size:9px;line-height:10.055px;color:#c8102e;font-weight:normal;font-style:normal;">S</div>
<div class="t" style="left:29px;top:187.464px;font-family:'Liberation Sans', sans-serif;font-size:14.4px;line-height:16.088px;color:#111;font-weight:normal;font-style:normal;transform:scale(1.0,1.05);transform-origin:0 13.036px;">playerTwoScore</div>
<svg style="position:absolute;left:8px;top:213.5px;" width="9" height="9" viewBox="0 0 9 9"><circle cx="4.5" cy="4.5" r="2.6" fill="none" stroke="#2a8a40" stroke-width="1.4"/></svg>
<div class="t" style="left:19px;top:207.352px;font-family:'Liberation Sans', sans-serif;font-size:9px;line-height:10.055px;color:#c8102e;font-weight:normal;font-style:normal;">S</div>
<div class="t" style="left:29px;top:210.464px;font-family:'Liberation Sans', sans-serif;font-size:14.4px;line-height:16.088px;color:#111;font-weight:normal;font-style:normal;transform:scale(1.0,1.05);transform-origin:0 13.036px;">playerOne<span style="color:#a08850"> : Arra</span></div>
<svg style="position:absolute;left:8px;top:236.5px;" width="9" height="9" viewBox="0 0 9 9"><circle cx="4.5" cy="4.5" r="2.6" fill="none" stroke="#2a8a40" stroke-width="1.4"/></svg>
<div class="t" style="left:19px;top:230.352px;font-family:'Liberation Sans', sans-serif;font-size:9px;line-height:10.055px;color:#c8102e;font-weight:normal;font-style:normal;">S</div>
<div class="t" style="left:29px;top:233.464px;font-family:'Liberation Sans', sans-serif;font-size:14.4px;line-height:16.088px;color:#111;font-weight:normal;font-style:normal;transform:scale(1.0,1.05);transform-origin:0 13.036px;">playerTwo<span style="color:#a08850"> : Arra</span></div>
<svg style="position:absolute;left:8px;top:259.5px;" width="9" height="9" viewBox="0 0 9 9"><circle cx="4.5" cy="4.5" r="2.6" fill="none" stroke="#2a8a40" stroke-width="1.4"/></svg>
<div class="t" style="left:19px;top:253.352px;font-family:'Liberation Sans', sans-serif;font-size:9px;line-height:10.055px;color:#c8102e;font-weight:normal;font-style:normal;">S</div>
<div class="t" style="left:29px;top:256.464px;font-family:'Liberation Sans', sans-serif;font-size:14.4px;line-height:16.088px;color:#111;font-weight:normal;font-style:normal;transform:scale(1.0,1.05);transform-origin:0 13.036px;">gameboardX<span style="color:#a08850"> : A</span></div>
<svg style="position:absolute;left:8px;top:282.5px;" width="9" height="9" viewBox="0 0 9 9"><circle cx="4.5" cy="4.5" r="2.6" fill="none" stroke="#2a8a40" stroke-width="1.4"/></svg>
<div class="t" style="left:19px;top:276.352px;font-family:'Liberation Sans', sans-serif;font-size:9px;line-height:10.055px;color:#c8102e;font-weight:normal;font-style:normal;">S</div>
<div class="t" style="left:29px;top:279.464px;font-family:'Liberation Sans', sans-serif;font-size:14.4px;line-height:16.088px;color:#111;font-weight:normal;font-style:normal;transform:scale(1.0,1.05);transform-origin:0 13.036px;">gameboardY<span style="color:#a08850"> : A</span></div>
<svg style="position:absolute;left:8px;top:305.5px;" width="9" height="9" viewBox="0 0 9 9"><circle cx="4.5" cy="4.5" r="2.6" fill="none" stroke="#2a8a40" stroke-width="1.4"/></svg>
<div class="t" style="left:19px;top:299.352px;font-family:'Liberation Sans', sans-serif;font-size:9px;line-height:10.055px;color:#c8102e;font-weight:normal;font-style:normal;">S</div>
<div class="t" style="left:29px;top:302.464px;font-family:'Liberation Sans', sans-serif;font-size:14.4px;line-height:16.088px;color:#111;font-weight:normal;font-style:normal;transform:scale(1.0,1.05);transform-origin:0 13.036px;">spinner<span style="color:#a08850"> : ArrayLi</span></div>
<svg style="position:absolute;left:8px;top:328.5px;" width="9" height="9" viewBox="0 0 9 9"><circle cx="4.5" cy="4.5" r="2.6" fill="none" stroke="#2a8a40" stroke-width="1.4"/></svg>
<div class="t" style="left:19px;top:322.352px;font-family:'Liberation Sans', sans-serif;font-size:9px;line-height:10.055px;color:#c8102e;font-weight:normal;font-style:normal;">S</div>
<div class="t" style="left:29px;top:325.464px;font-family:'Liberation Sans', sans-serif;font-size:14.4px;line-height:16.088px;color:#111;font-weight:normal;font-style:normal;transform:scale(1.0,1.05);transform-origin:0 13.036px;">boneyard<span style="color:#a08850"> : Array</span></div>
<svg style="position:absolute;left:8px;top:351.5px;" width="9" height="9" viewBox="0 0 9 9"><circle cx="4.5" cy="4.5" r="2.6" fill="none" stroke="#2a8a40" stroke-width="1.4"/></svg>
<div class="t" style="left:19px;top:345.352px;font-family:'Liberation Sans', sans-serif;font-size:9px;line-height:10.055px;color:#c8102e;font-weight:normal;font-style:normal;">S</div>
<div class="t" style="left:29px;top:348.464px;font-family:'Liberation Sans', sans-serif;font-size:14.4px;line-height:16.088px;color:#111;font-weight:normal;font-style:normal;transform:scale(1.0,1.05);transform-origin:0 13.036px;">tempArray<span style="color:#a08850"> : Arra</span></div>
<svg style="position:absolute;left:8px;top:374.5px;" width="9" height="9" viewBox="0 0 9 9"><circle cx="4.5" cy="4.5" r="2.6" fill="none" stroke="#2a8a40" stroke-width="1.4"/></svg>
<div class="t" style="left:19px;top:368.352px;font-family:'Liberation Sans', sans-serif;font-size:9px;line-height:10.055px;color:#c8102e;font-weight:normal;font-style:normal;">S</div>
<div class="t" style="left:29px;top:371.464px;font-family:'Liberation Sans', sans-serif;font-size:14.4px;line-height:16.088px;color:#111;font-weight:normal;font-style:normal;transform:scale(1.0,1.05);transform-origin:0 13.036px;">canPlayGamebo</div>
<svg style="position:absolute;left:7px;top:398.5px;" width="9" height="9" viewBox="0 0 9 9"><path d="M4.5 1.2 L7.8 7.2 H1.2 Z" fill="none" stroke="#1f5fa8" stroke-width="1.5"/></svg>
<div class="t" style="left:19px;top:391.352px;font-family:'Liberation Sans', sans-serif;font-size:9px;line-height:10.055px;color:#c8102e;font-weight:normal;font-style:normal;">S</div>
<div class="t" style="left:29px;top:394.464px;font-family:'Liberation Sans', sans-serif;font-size:14.4px;line-height:16.088px;color:#111;font-weight:normal;font-style:normal;transform:scale(1.0,1.05);transform-origin:0 13.036px;">gui<span style="color:#a08850"> : GUI</span></div>
<svg style="position:absolute;left:7px;top:421.5px;" width="9" height="9" viewBox="0 0 9 9"><path d="M4.5 1.2 L7.8 7.2 H1.2 Z" fill="none" stroke="#1f5fa8" stroke-width="1.5"/></svg>
<div class="t" style="left:19px;top:414.352px;font-family:'Liberation Sans', sans-serif;font-size:9px;line-height:10.055px;color:#c8102e;font-weight:normal;font-style:normal;">S</div>
<div class="t" style="left:29px;top:417.464px;font-family:'Liberation Sans', sans-serif;font-size:14.4px;line-height:16.088px;color:#111;font-weight:normal;font-style:normal;transform:scale(1.0,1.05);transform-origin:0 13.036px;">t<span style="color:#a08850"> : TileSet</span></div>
<svg style="position:absolute;left:8px;top:442.5px;" width="11" height="11" viewBox="0 0 11 11"><circle cx="4.5" cy="5.5" r="4.2" fill="#62b062" stroke="#3a8a48" stroke-width="0.8"/></svg>
<div class="t" style="left:19px;top:437.352px;font-family:'Liberation Sans', sans-serif;font-size:9px;line-height:10.055px;color:#c8102e;font-weight:normal;font-style:normal;">S</div>
<div class="t" style="left:29px;top:440.464px;font-family:'Liberation Sans', sans-serif;font-size:14.4px;line-height:16.088px;color:#111;font-weight:normal;font-style:normal;transform:scale(1.0,1.05);transform-origin:0 13.036px;">main(String[]) : v</div>
<svg style="position:absolute;left:8px;top:465.5px;" width="11" height="11" viewBox="0 0 11 11"><circle cx="4.5" cy="5.5" r="4.2" fill="#62b062" stroke="#3a8a48" stroke-width="0.8"/></svg>
<div class="t" style="left:19px;top:460.352px;font-family:'Liberation Sans', sans-serif;font-size:9px;line-height:10.055px;color:#c8102e;font-weight:normal;font-style:normal;">S</div>
<div class="t" style="left:29px;top:463.464px;font-family:'Liberation Sans', sans-serif;font-size:14.4px;line-height:16.088px;color:#111;font-weight:normal;font-style:normal;transform:scale(1.0,1.05);transform-origin:0 13.036px;">resetGame(Array</div>
<svg style="position:absolute;left:3px;top:487.5px;" width="15" height="16" viewBox="0 0 15 16"><circle cx="9.5" cy="6.5" r="4.2" fill="#62b062" stroke="#3a8a48" stroke-width="0.8"/><path d="M4 7.5 L8 14.5 H0 Z" fill="#f8c440" stroke="#a07010" stroke-width="0.8"/><path d="M4 10 v2.5" stroke="#333" stroke-width="1"/></svg>
<div class="t" style="left:19px;top:483.352px;font-family:'Liberation Sans', sans-serif;font-size:9px;line-height:10.055px;color:#c8102e;font-weight:normal;font-style:normal;">S</div>
<div class="t" style="left:29px;top:486.464px;font-family:'Liberation Sans', sans-serif;font-size:14.4px;line-height:16.088px;color:#111;font-weight:normal;font-style:normal;transform:scale(1.0,1.05);transform-origin:0 13.036px;">playerVsAI(Array</div>
<svg style="position:absolute;left:8px;top:511.5px;" width="11" height="11" viewBox="0 0 11 11"><circle cx="4.5" cy="5.5" r="4.2" fill="#62b062" stroke="#3a8a48" stroke-width="0.8"/></svg>
<div class="t" style="left:19px;top:506.352px;font-family:'Liberation Sans', sans-serif;font-size:9px;line-height:10.055px;color:#c8102e;font-weight:normal;font-style:normal;">S</div>
<div class="t" style="left:29px;top:509.464px;font-family:'Liberation Sans', sans-serif;font-size:14.4px;line-height:16.088px;color:#111;font-weight:normal;font-style:normal;transform:scale(1.0,1.05);transform-origin:0 13.036px;">turnAI(boolean, </div>
<svg style="position:absolute;left:3px;top:533.5px;" width="15" height="16" viewBox="0 0 15 16"><circle cx="9.5" cy="6.5" r="4.2" fill="#62b062" stroke="#3a8a48" stroke-width="0.8"/><path d="M4 7.5 L8 14.5 H0 Z" fill="#f8c440" stroke="#a07010" stroke-width="0.8"/><path d="M4 10 v2.5" stroke="#333" stroke-width="1"/></svg>
<div class="t" style="left:19px;top:529.352px;font-family:'Liberation Sans', sans-serif;font-size:9px;line-height:10.055px;color:#c8102e;font-weight:normal;font-style:normal;">S</div>
<div class="t" style="left:29px;top:532.464px;font-family:'Liberation Sans', sans-serif;font-size:14.4px;line-height:16.088px;color:#111;font-weight:normal;font-style:normal;transform:scale(1.0,1.05);transform-origin:0 13.036px;">playerVsPlayer(A</div>
<svg style="position:absolute;left:8px;top:557.5px;" width="11" height="11" viewBox="0 0 11 11"><circle cx="4.5" cy="5.5" r="4.2" fill="#62b062" stroke="#3a8a48" stroke-width="0.8"/></svg>
<div class="t" style="left:19px;top:552.352px;font-family:'Liberation Sans', sans-serif;font-size:9px;line-height:10.055px;color:#c8102e;font-weight:normal;font-style:normal;">S</div>
<div class="t" style="left:29px;top:555.464px;font-family:'Liberation Sans', sans-serif;font-size:14.4px;line-height:16.088px;color:#111;font-weight:normal;font-style:normal;transform:scale(1.0,1.05);transform-origin:0 13.036px;">turnText(ArrayLis</div>
<svg style="position:absolute;left:8px;top:580.5px;" width="11" height="11" viewBox="0 0 11 11"><circle cx="4.5" cy="5.5" r="4.2" fill="#62b062" stroke="#3a8a48" stroke-width="0.8"/></svg>
<div class="t" style="left:19px;top:575.352px;font-family:'Liberation Sans', sans-serif;font-size:9px;line-height:10.055px;color:#c8102e;font-weight:normal;font-style:normal;">S</div>
<div class="t" style="left:29px;top:578.464px;font-family:'Liberation Sans', sans-serif;font-size:14.4px;line-height:16.088px;color:#111;font-weight:normal;font-style:normal;transform:scale(1.0,1.05);transform-origin:0 13.036px;">getCurrentHand</div>
<svg style="position:absolute;left:3px;top:602.5px;" width="15" height="16" viewBox="0 0 15 16"><circle cx="9.5" cy="6.5" r="4.2" fill="#62b062" stroke="#3a8a48" stroke-width="0.8"/><path d="M4 7.5 L8 14.5 H0 Z" fill="#f8c440" stroke="#a07010" stroke-width="0.8"/><path d="M4 10 v2.5" stroke="#333" stroke-width="1"/></svg>
<div class="t" style="left:19px;top:598.352px;font-family:'Liberation Sans', sans-serif;font-size:9px;line-height:10.055px;color:#c8102e;font-weight:normal;font-style:normal;">S</div>
<div class="t" style="left:29px;top:601.464px;font-family:'Liberation Sans', sans-serif;font-size:14.4px;line-height:16.088px;color:#111;font-weight:normal;font-style:normal;transform:scale(1.0,1.05);transform-origin:0 13.036px;">turn(boolean, Ar</div>
<svg style="position:absolute;left:8px;top:626.5px;" width="11" height="11" viewBox="0 0 11 11"><circle cx="4.5" cy="5.5" r="4.2" fill="#62b062" stroke="#3a8a48" stroke-width="0.8"/></svg>
<div class="t" style="left:19px;top:621.352px;font-family:'Liberation Sans', sans-serif;font-size:9px;line-height:10.055px;color:#c8102e;font-weight:normal;font-style:normal;">S</div>
<div class="t" style="left:29px;top:624.464px;font-family:'Liberation Sans', sans-serif;font-size:14.4px;line-height:16.088px;color:#111;font-weight:normal;font-style:normal;transform:scale(1.0,1.05);transform-origin:0 13.036px;">canPlayGamebo</div>
<svg style="position:absolute;left:3px;top:648.5px;" width="15" height="16" viewBox="0 0 15 16"><circle cx="9.5" cy="6.5" r="4.2" fill="#62b062" stroke="#3a8a48" stroke-width="0.8"/><path d="M4 7.5 L8 14.5 H0 Z" fill="#f8c440" stroke="#a07010" stroke-width="0.8"/><path d="M4 10 v2.5" stroke="#333" stroke-width="1"/></svg>
<div class="t" style="left:19px;top:644.352px;font-family:'Liberation Sans', sans-serif;font-size:9px;line-height:10.055px;color:#c8102e;font-weight:normal;font-style:normal;">S</div>
<div class="t" style="left:29px;top:647.464px;font-family:'Liberation Sans', sans-serif;font-size:14.4px;line-height:16.088px;color:#111;font-weight:normal;font-style:normal;transform:scale(1.0,1.05);transform-origin:0 13.036px;">fixBoardX(ArrayL</div>
<svg style="position:absolute;left:3px;top:671.5px;" width="15" height="16" viewBox="0 0 15 16"><circle cx="9.5" cy="6.5" r="4.2" fill="#62b062" stroke="#3a8a48" stroke-width="0.8"/><path d="M4 7.5 L8 14.5 H0 Z" fill="#f8c440" stroke="#a07010" stroke-width="0.8"/><path d="M4 10 v2.5" stroke="#333" stroke-width="1"/></svg>
<div class="t" style="left:19px;top:667.352px;font-family:'Liberation Sans', sans-serif;font-size:9px;line-height:10.055px;color:#c8102e;font-weight:normal;font-style:normal;">S</div>
<div class="t" style="left:29px;top:670.464px;font-family:'Liberation Sans', sans-serif;font-size:14.4px;line-height:16.088px;color:#111;font-weight:normal;font-style:normal;transform:scale(1.0,1.05);transform-origin:0 13.036px;">fixBoardY(ArrayL</div>
<svg style="position:absolute;left:3px;top:694.5px;" width="15" height="16" viewBox="0 0 15 16"><circle cx="9.5" cy="6.5" r="4.2" fill="#62b062" stroke="#3a8a48" stroke-width="0.8"/><path d="M4 7.5 L8 14.5 H0 Z" fill="#f8c440" stroke="#a07010" stroke-width="0.8"/><path d="M4 10 v2.5" stroke="#333" stroke-width="1"/></svg>
<div class="t" style="left:19px;top:690.352px;font-family:'Liberation Sans', sans-serif;font-size:9px;line-height:10.055px;color:#c8102e;font-weight:normal;font-style:normal;">S</div>
<div class="t" style="left:29px;top:693.464px;font-family:'Liberation Sans', sans-serif;font-size:14.4px;line-height:16.088px;color:#111;font-weight:normal;font-style:normal;transform:scale(1.0,1.05);transform-origin:0 13.036px;">TilesYouCanPlay</div>
<svg style="position:absolute;left:8px;top:718.5px;" width="11" height="11" viewBox="0 0 11 11"><circle cx="4.5" cy="5.5" r="4.2" fill="#62b062" stroke="#3a8a48" stroke-width="0.8"/></svg>
<div class="t" style="left:19px;top:713.352px;font-family:'Liberation Sans', sans-serif;font-size:9px;line-height:10.055px;color:#c8102e;font-weight:normal;font-style:normal;">S</div>
<div class="t" style="left:29px;top:716.464px;font-family:'Liberation Sans', sans-serif;font-size:14.4px;line-height:16.088px;color:#111;font-weight:normal;font-style:normal;transform:scale(1.0,1.05);transform-origin:0 13.036px;">distributeHands</div>
<svg style="position:absolute;left:8px;top:741.5px;" width="11" height="11" viewBox="0 0 11 11"><circle cx="4.5" cy="5.5" r="4.2" fill="#62b062" stroke="#3a8a48" stroke-width="0.8"/></svg>
<div class="t" style="left:19px;top:736.352px;font-family:'Liberation Sans', sans-serif;font-size:9px;line-height:10.055px;color:#c8102e;font-weight:normal;font-style:normal;">S</div>
<div class="t" style="left:29px;top:739.464px;font-family:'Liberation Sans', sans-serif;font-size:14.4px;line-height:16.088px;color:#111;font-weight:normal;font-style:normal;transform:scale(1.0,1.05);transform-origin:0 13.036px;">moveTileSetToB</div>
<svg style="position:absolute;left:8px;top:764.5px;" width="11" height="11" viewBox="0 0 11 11"><circle cx="4.5" cy="5.5" r="4.2" fill="#62b062" stroke="#3a8a48" stroke-width="0.8"/></svg>
<div class="t" style="left:19px;top:759.352px;font-family:'Liberation Sans', sans-serif;font-size:9px;line-height:10.055px;color:#c8102e;font-weight:normal;font-style:normal;">S</div>
<div class="t" style="left:29px;top:762.464px;font-family:'Liberation Sans', sans-serif;font-size:14.4px;line-height:16.088px;color:#111;font-weight:normal;font-style:normal;transform:scale(1.0,1.05);transform-origin:0 13.036px;">p1GoesFirst(Arra</div>
<svg style="position:absolute;left:8px;top:787.5px;" width="11" height="11" viewBox="0 0 11 11"><circle cx="4.5" cy="5.5" r="4.2" fill="#62b062" stroke="#3a8a48" stroke-width="0.8"/></svg>
<div class="t" style="left:19px;top:782.352px;font-family:'Liberation Sans', sans-serif;font-size:9px;line-height:10.055px;color:#c8102e;font-weight:normal;font-style:normal;">S</div>
<div class="t" style="left:29px;top:785.464px;font-family:'Liberation Sans', sans-serif;font-size:14.4px;line-height:16.088px;color:#111;font-weight:normal;font-style:normal;transform:scale(1.0,1.05);transform-origin:0 13.036px;">drawFromBoney</div>
</div>
<div style="position:absolute;left:1893px;top:172px;width:20px;height:807px;background:#f0f0f0;"></div>
<div style="position:absolute;left:1893px;top:193px;width:20px;height:687px;background:#cdcdcd;"></div>
<svg style="position:absolute;left:1897px;top:178px;" width="12" height="8" viewBox="0 0 12 8"><path d="M1 7 L6 2 L11 7" stroke="#606060" stroke-width="1.8" fill="none"/></svg>
<svg style="position:absolute;left:1897px;top:963px;" width="12" height="8" viewBox="0 0 12 8"><path d="M1 1 L6 6 L11 1" stroke="#606060" stroke-width="1.8" fill="none"/></svg>
<div style="position:absolute;left:1756px;top:980px;width:157px;height:19px;background:#f0f0f0;"></div>
<div style="position:absolute;left:1783px;top:980px;width:21px;height:19px;background:#cdcdcd;"></div>
<svg style="position:absolute;left:1763px;top:984px;" width="9" height="11" viewBox="0 0 9 11"><path d="M7 1 L2 5.5 L7 10" stroke="#606060" stroke-width="1.8" fill="none"/></svg>
<svg style="position:absolute;left:1876px;top:984px;" width="9" height="11" viewBox="0 0 9 11"><path d="M2 1 L7 5.5 L2 10" stroke="#606060" stroke-width="1.8" fill="none"/></svg>
<div style="position:absolute;left:1562px;top:1011px;width:1px;height:2px;background:#a09070;"></div>
<div style="position:absolute;left:1562px;top:1014px;width:1px;height:2px;background:#a09070;"></div>
<div style="position:absolute;left:1562px;top:1017px;width:1px;height:2px;background:#a09070;"></div>
<div style="position:absolute;left:1562px;top:1020px;width:1px;height:2px;background:#a09070;"></div>
<div style="position:absolute;left:1562px;top:1023px;width:1px;height:2px;background:#a09070;"></div>
<div style="position:absolute;left:1562px;top:1026px;width:1px;height:2px;background:#a09070;"></div>
<div style="position:absolute;left:0px;top:1032px;width:1919px;height:48px;background:linear-gradient(#2b96cb,#2a8cc2);"></div>
<div style="position:absolute;left:0px;top:1032px;width:1919px;height:1px;background:#1f7cb4;"></div>
<div style="position:absolute;left:0px;top:1031px;width:1919px;height:1px;background:#eceaf6;"></div>
<svg style="position:absolute;left:0px;top:1032px;" width="1919" height="48" viewBox="0 0 1919 48"><path d="M732 0 H754 L711 48 H689 Z" fill="#2b5868"/><path d="M1331 0 H1362 L1320 48 H1288 Z" fill="#2b5868"/><path d="M282 0 H300 L254 48 H236 Z" fill="#2b5868"/></svg>
<svg style="position:absolute;left:12px;top:1039px;" width="34" height="34" viewBox="0 0 34 34"><path d="M0 4.5 L14 2.6 V16 H0 Z M16 2.3 L33 0 V16 H16 Z M0 18 H14 V31.4 L0 29.5 Z M16 18 H33 V34 L16 31.7 Z" fill="#fff"/></svg>
<svg style="position:absolute;left:74px;top:1035px;" width="42" height="40" viewBox="0 0 42 40"><path d="M31 9 q-4 -5 -11 -5 q-9 0 -13 9 q-3 8 2 14 q6 6 15 4 q5 -1 8 -4" fill="none" stroke="#4ab8ec" stroke-width="6"/><path d="M10 20 h20" stroke="#4ab8ec" stroke-width="5"/><path d="M4 33 q-6 -8 12 -22 q18 -12 23 -7 q4 5 -9 16" fill="none" stroke="#f0b820" stroke-width="2.5"/></svg>
<div style="position:absolute;left:134px;top:1033px;width:69px;height:46px;background:rgba(255,255,255,0.2);border:1px solid rgba(255,255,255,0.3);box-sizing:border-box;"></div>
<div style="position:absolute;left:207px;top:1033px;width:69px;height:46px;background:rgba(255,255,255,0.2);border:1px solid rgba(255,255,255,0.3);box-sizing:border-box;"></div>
<div style="position:absolute;left:280px;top:1033px;width:69px;height:46px;background:rgba(255,255,255,0.2);border:1px solid rgba(255,255,255,0.3);box-sizing:border-box;"></div>
<div style="position:absolute;left:353px;top:1033px;width:69px;height:46px;background:rgba(255,255,255,0.28);border:1px solid rgba(255,255,255,0.45);box-sizing:border-box;"></div>
<svg style="position:absolute;left:148px;top:1036px;" width="42" height="40" viewBox="0 0 42 40"><path d="M2 6 h14 l3 3 h20 v26 h-37 Z" fill="#e8c46a" stroke="#c09848"/><rect x="5" y="5" width="30" height="6" fill="#fff" stroke="#ccc"/><rect x="6" y="3" width="3" height="3" fill="#3a9a40"/><rect x="15" y="7" width="3" height="3" fill="#d03030"/><rect x="26" y="10" width="3" height="3" fill="#3070c0"/><path d="M2 14 h37 v21 h-37 Z" fill="#f4d890"/><path d="M8 24 h26 l2 15 h-30 Z" fill="#6ab0e0" stroke="#3a88c0"/><rect x="14" y="31" width="14" height="4" fill="#f0c050"/></svg>
<svg style="position:absolute;left:220px;top:1036px;" width="40" height="40" viewBox="0 0 40 40"><circle cx="20" cy="20" r="17" fill="#dd3b30"/><path d="M20 20 L5.3 28.5 A17 17 0 0 0 30 33.8 Z" fill="#2aa14a"/><path d="M20 20 L30 33.8 A17 17 0 0 0 34.7 11.5 Z" fill="#f6c81a"/><path d="M20 20 L34.7 11.5 L20 11.5 Z" fill="#f6c81a"/><circle cx="20" cy="20" r="8" fill="#fff"/><circle cx="20" cy="20" r="6.2" fill="#3e80d8"/></svg>
<svg style="position:absolute;left:293px;top:1036px;" width="42" height="40" viewBox="0 0 42 40"><circle cx="20" cy="20" r="19" fill="#f7941e"/><circle cx="22" cy="20" r="18" fill="#2c2255"/><rect x="4" y="14" width="36" height="3" fill="#fff"/><rect x="4" y="19" width="36" height="3" fill="#fff"/><rect x="4" y="24" width="36" height="3" fill="#fff"/></svg>
<div style="position:absolute;left:367px;top:1037px;width:40px;height:39px;background:linear-gradient(#fff,#e8e8e8);border:1px solid #8a9aa8;border-radius:4px;box-sizing:border-box;"></div>
<svg style="position:absolute;left:373px;top:1039px;" width="30" height="36" viewBox="0 0 30 36"><path d="M15 2 q-4 5 0 9 q3 4 -1 8 M19 6 q-3 4 0 7 q2 3 -1 5" stroke="#e8762a" stroke-width="2" fill="none"/><path d="M6 22 q9 5 18 0 M8 26 q7 3 14 0 M4 31 q11 5 22 0" stroke="#5a8ab8" stroke-width="1.8" fill="none"/></svg>
<svg style="position:absolute;left:1592px;top:1053px;" width="11" height="6" viewBox="0 0 11 6"><path d="M0 6 L5.5 0 L11 6 Z" fill="#fff"/></svg>
<svg style="position:absolute;left:1616px;top:1047px;" width="20" height="20" viewBox="0 0 20 20"><path d="M0.8 3 L19.2 0.8 V19.2 L0.8 17 Z M10 2 V18 M0.8 10 H19.2" fill="none" stroke="#fff" stroke-width="1.6"/></svg>
<svg style="position:absolute;left:1646px;top:1047px;" width="20" height="20" viewBox="0 0 20 20"><path d="M1.5 0 V20" stroke="#fff" stroke-width="1.6"/><path d="M2 1.5 q4 -1 7.5 0.5 v8 q-3.5 -1.5 -7.5 -0.5 Z M9.5 3 q4 1.5 9 0.5 q-1.5 4 0 8 q-5 1 -9 -1.5" fill="none" stroke="#fff" stroke-width="1.4"/></svg>
<svg style="position:absolute;left:1677px;top:1047px;" width="20" height="20" viewBox="0 0 20 20"><path d="M2 0 v5 M6 0 v5 M0 5 h8 v4 q0 3 -4 3 q-4 0 -4 -3 Z M4 12 v8" stroke="#fff" stroke-width="1.6" fill="#fff"/><rect x="10.5" y="2.5" width="8" height="16" rx="1" fill="none" stroke="#fff" stroke-width="1.6"/><rect x="13" y="0.5" width="3" height="2" fill="#fff"/></svg>
<svg style="position:absolute;left:1707px;top:1049px;" width="16" height="17" viewBox="0 0 16 17"><path d="M0.6 16.4 h2.2 v-2.6 h-2.2 Z M4.4 16.4 h2.2 v-5.6 h-2.2 Z M8.2 16.4 h2.2 v-8.6 h-2.2 Z M12.2 16.4 h2.6 v-14.6 h-2.6 Z" fill="none" stroke="#fff" stroke-width="1.2"/></svg>
<svg style="position:absolute;left:1735px;top:1046px;" width="22" height="22" viewBox="0 0 22 22"><path d="M1.5 7.5 h3.5 l5.5 -5.5 v17 l-5.5 -5.5 h-3.5 Z" fill="none" stroke="#fff" stroke-width="1.5"/><circle cx="16" cy="16" r="5" fill="#fff"/><circle cx="16" cy="16" r="4" fill="none" stroke="#e02020" stroke-width="2"/><path d="M13 13 L19 19" stroke="#e02020" stroke-width="2"/></svg>
<div class="t" style="left:1773.5px;top:1051.007px;font-family:'Liberation Sans', sans-serif;font-size:13.8px;line-height:15.417px;color:#fff;font-weight:normal;font-style:normal;transform:scale(1.0,1.08);transform-origin:0 12.493px;">ENG</div>
<div class="t" style="left:1842.5px;top:1039.764px;font-family:'Liberation Sans', sans-serif;font-size:14.4px;line-height:16.088px;color:#fff;font-weight:normal;font-style:normal;transform:scale(1.0,1.05);transform-origin:0 13.036px;">06:00</div>
<div class="t" style="left:1822.5px;top:1060.802px;font-family:'Liberation Sans', sans-serif;font-size:14.8px;line-height:16.535px;color:#fff;font-weight:normal;font-style:normal;transform:scale(1.0,1.05);transform-origin:0 13.398px;">30/08/2015</div>
<div style="position:absolute;left:904px;top:42px;width:812px;height:811px;background:#6bbff0;border:1px solid #3b9ad0;box-sizing:border-box;"></div>
<div style="position:absolute;left:913px;top:80px;width:795px;height:766px;background:#eeeeee;"></div>
<div style="position:absolute;left:913px;top:80px;width:795px;height:22px;background:linear-gradient(#fdfdfd,#f0f0f0 55%,#e2e2e2);"></div>
<div style="position:absolute;left:913px;top:102px;width:795px;height:1px;background:#cdcdcd;"></div>
<div style="position:absolute;left:915px;top:51px;width:20px;height:19px;background:linear-gradient(#fff,#e6e6e6);border:1px solid #5a6a78;border-radius:3px;box-sizing:border-box;"></div>
<svg style="position:absolute;left:917px;top:52px;" width="16" height="17" viewBox="0 0 16 17"><path d="M8.5 1 q-2.5 3 0 5 q2 2 -1 4 M10.5 3 q-2 2 0 4" stroke="#e8762a" stroke-width="1.5" fill="none"/><path d="M3 11 q5.5 3 11 0 M2 14 q6.5 3 13 0" stroke="#4a7aa8" stroke-width="1.3" fill="none"/></svg>
<div class="t" style="left:1226.5px;top:51.324px;font-family:'Liberation Sans', sans-serif;font-size:18.2px;line-height:20.333px;color:#262626;font-weight:normal;font-style:normal;">Lets Play Dominoes!</div>
<div style="position:absolute;left:1592px;top:60px;width:14px;height:2px;background:#1a1a1a;"></div>
<div style="position:absolute;left:1625px;top:50px;width:15px;height:12px;border:1px solid #3a5a70;border-top:2px solid #3a5a70;box-sizing:border-box;"></div>
<div style="position:absolute;left:1650px;top:43px;width:58px;height:26px;background:#c75050;"></div>
<svg style="position:absolute;left:1673px;top:50px;" width="12" height="11" viewBox="0 0 12 11"><path d="M1.5 1 L10.5 10 M10.5 1 L1.5 10" stroke="#fff" stroke-width="2.4"/></svg>
<div class="t" style="left:918.7px;top:84.046px;font-family:'Liberation Sans', sans-serif;font-size:12.1px;line-height:13.518px;color:#1a1a1a;font-weight:bold;font-style:normal;">Options</div>
<div class="t" style="left:976px;top:84.046px;font-family:'Liberation Sans', sans-serif;font-size:12.1px;line-height:13.518px;color:#1a1a1a;font-weight:bold;font-style:normal;">Help</div>
<div style="position:absolute;left:1199px;top:437px;width:222px;height:74px;background:#fff;"></div>
<svg style="position:absolute;left:0;top:0;" width="1919" height="1080" viewBox="0 0 1919 1080"><rect x="1201" y="452" width="70" height="46" fill="none" stroke="#000" stroke-width="4"/><path d="M1234.5 457 V493" stroke="#000" stroke-width="2.2"/><circle cx="1210.6" cy="462.5" r="4.4" fill="#000"/><circle cx="1210.6" cy="475" r="4.4" fill="#000"/><circle cx="1210.6" cy="487.5" r="4.4" fill="#000"/><circle cx="1225.6" cy="462.5" r="4.4" fill="#000"/><circle cx="1225.6" cy="475" r="4.4" fill="#000"/><circle cx="1225.6" cy="487.5" r="4.4" fill="#000"/><circle cx="1261.7" cy="463.7" r="4.8" fill="#000"/><circle cx="1244.6" cy="487.3" r="4.4" fill="#000"/><rect x="1287" y="439" width="46" height="70" fill="none" stroke="#000" stroke-width="4"/><path d="M1292 472.4 H1328" stroke="#000" stroke-width="2.2"/><circle cx="1296.4" cy="447.7" r="4.4" fill="#000"/><circle cx="1296.4" cy="462.5" r="4.4" fill="#000"/><circle cx="1296.4" cy="482.9" r="4.4" fill="#000"/><circle cx="1296.4" cy="497.7" r="4.4" fill="#000"/><circle cx="1309.5" cy="447.7" r="4.4" fill="#000"/><circle cx="1309.5" cy="462.5" r="4.4" fill="#000"/><circle cx="1309.5" cy="482.9" r="4.4" fill="#000"/><circle cx="1309.5" cy="497.7" r="4.4" fill="#000"/><circle cx="1322.5" cy="447.7" r="4.4" fill="#000"/><circle cx="1322.5" cy="462.5" r="4.4" fill="#000"/><circle cx="1322.5" cy="482.9" r="4.4" fill="#000"/><circle cx="1322.5" cy="497.7" r="4.4" fill="#000"/><rect x="1349" y="452" width="70" height="46" fill="none" stroke="#000" stroke-width="3.6"/><path d="M1382.2 457 V493" stroke="#000" stroke-width="2.2"/><circle cx="1357.5" cy="465.3" r="4.4" fill="#000"/><circle cx="1357.5" cy="475.5" r="4.4" fill="#000"/><circle cx="1357.5" cy="487.2" r="4.4" fill="#000"/><circle cx="1373.5" cy="465.3" r="4.4" fill="#000"/><circle cx="1373.5" cy="475.5" r="4.4" fill="#000"/><circle cx="1373.5" cy="487.2" r="4.4" fill="#000"/><circle cx="1392.4" cy="466.2" r="4.4" fill="#000"/><circle cx="1392.4" cy="488.4" r="4.4" fill="#000"/><circle cx="1408.6" cy="466.2" r="4.4" fill="#000"/><circle cx="1408.6" cy="488.4" r="4.4" fill="#000"/></svg>
<svg style="position:absolute;left:0;top:0;mix-blend-mode:multiply;" width="1919" height="1080" viewBox="0 0 1919 1080"><path d="M282 599 Q284 592 300 590 L321 587 H341 V594 H361 V597 H383 V617 H282 Z" fill="#ffff00"/><path d="M270 632 H300 L303 627 L318 630 H418 V652 H379 V661 H310 L295 656 L270 652 Z" fill="#ffff00"/><path d="M322 679 L594 676 V697 L322 700 Z" fill="#ffff00"/><path d="M1158 481 H1159 V475 H1166 V455 H1184 V444 H1215 L1262 449.6 H1290 L1292 452 L1331 453.7 V476 H1326 V502 H1323 V512.5 H1256 L1199 505 L1188 502 H1158 Z" fill="#ffff00"/></svg>
</body></html>
